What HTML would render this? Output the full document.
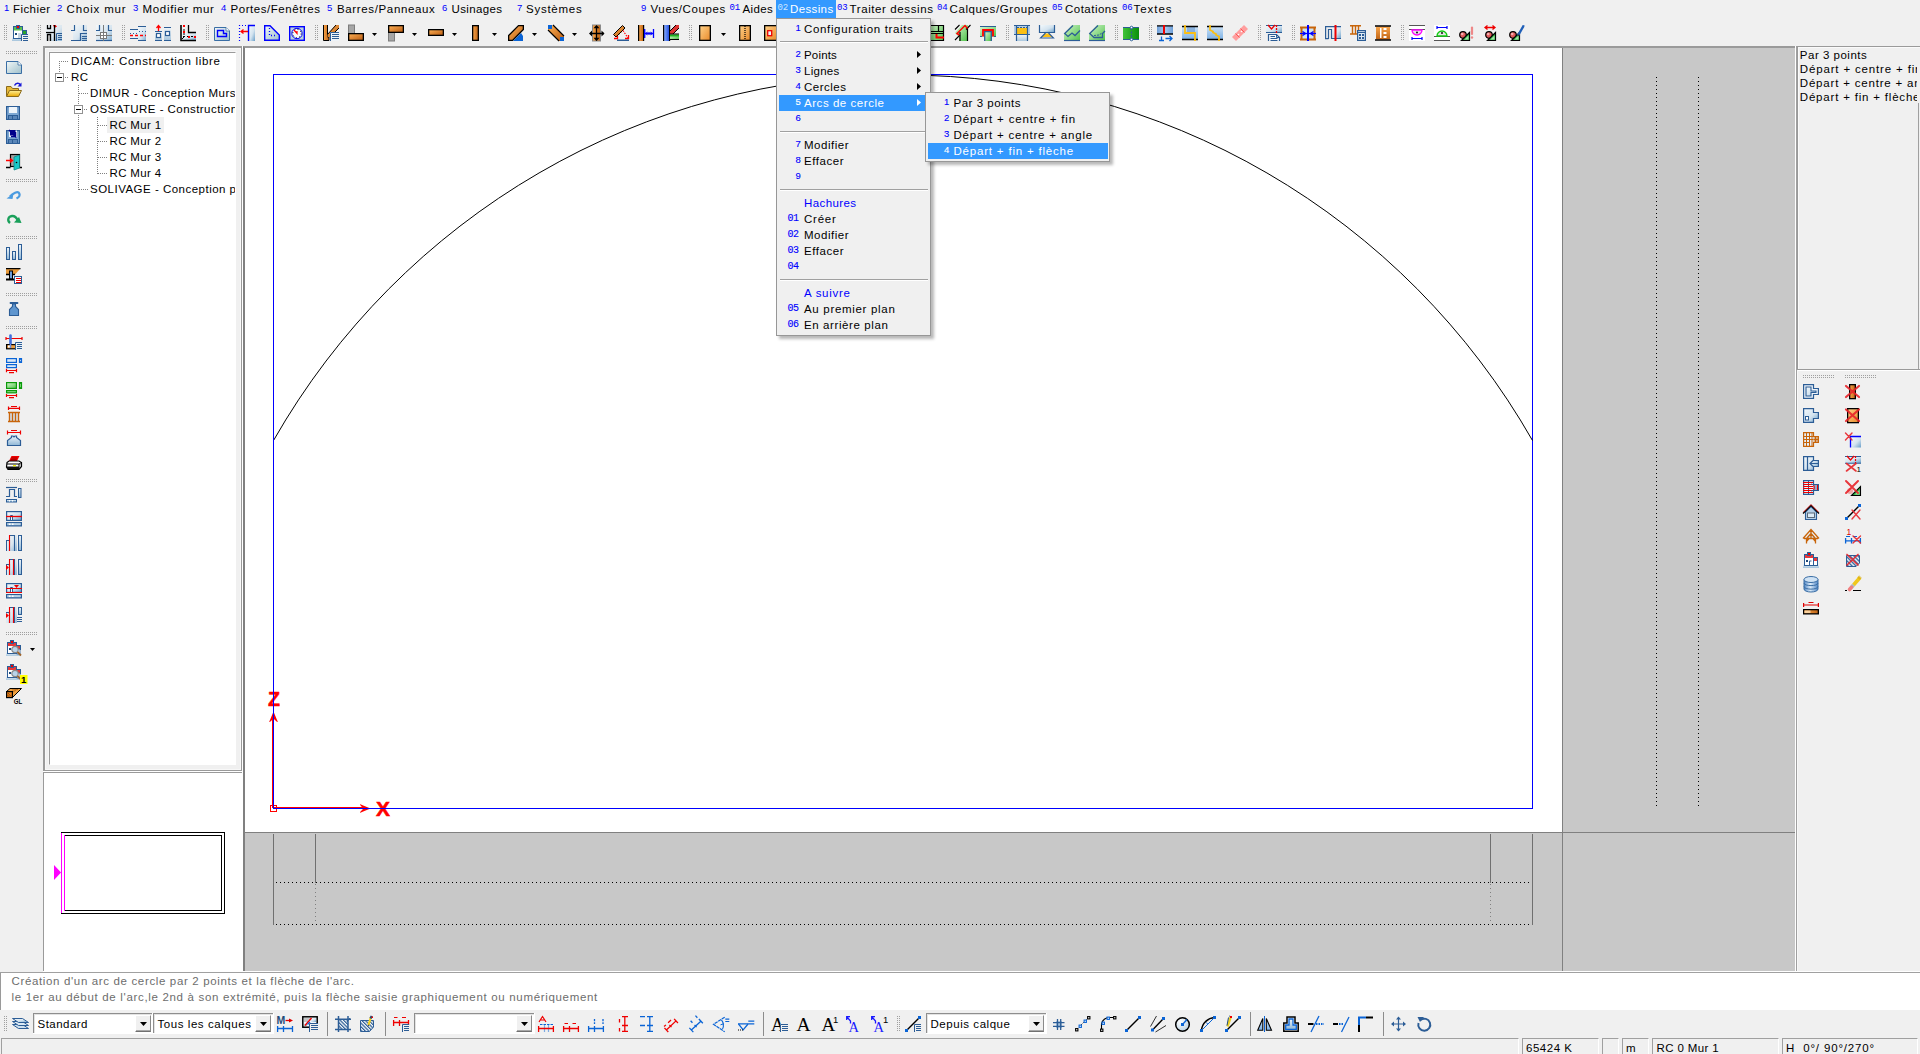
<!DOCTYPE html>
<html><head><meta charset="utf-8"><title>DICAM</title><style>
html,body{margin:0;padding:0;}
body{width:1920px;height:1054px;overflow:hidden;background:#f0f0f0;position:relative;font-family:"Liberation Sans",sans-serif;}
div,svg{position:absolute;}
.t{white-space:pre;line-height:14px;height:14px;}
.i{overflow:visible;}
.vg{width:3px;background-image:radial-gradient(circle at 0.5px 0.5px,#a0a0a0 0.6px,transparent 0.7px);background-size:2px 2px;}
.hg{height:3px;background-image:radial-gradient(circle at 0.5px 0.5px,#a0a0a0 0.6px,transparent 0.7px);background-size:2px 2px;}
</style></head><body>
<svg width="0" height="0" style="position:absolute"><defs>
<linearGradient id="gb" x1="0" y1="0" x2="1" y2="1"><stop offset="0" stop-color="#f4f9fc"/><stop offset="0.55" stop-color="#d3e3ef"/><stop offset="1" stop-color="#6a9fc9"/></linearGradient>
<linearGradient id="gbv" x1="0" y1="0" x2="0" y2="1"><stop offset="0" stop-color="#eef5fa"/><stop offset="1" stop-color="#8fb7d6"/></linearGradient>
<linearGradient id="gbg" x1="0" y1="0" x2="1" y2="1"><stop offset="0" stop-color="#f1f7f7"/><stop offset="1" stop-color="#9fc0cb"/></linearGradient>
<linearGradient id="go" x1="0" y1="0" x2="1" y2="1"><stop offset="0" stop-color="#ffb257"/><stop offset="1" stop-color="#b85a10"/></linearGradient>
<linearGradient id="goh" x1="0" y1="0" x2="0" y2="1"><stop offset="0" stop-color="#f9a54a"/><stop offset="1" stop-color="#bf6416"/></linearGradient>
<linearGradient id="gov" x1="0" y1="0" x2="1" y2="0"><stop offset="0" stop-color="#f9a54a"/><stop offset="1" stop-color="#bf6416"/></linearGradient>
<linearGradient id="gp" x1="0" y1="0" x2="1" y2="1"><stop offset="0" stop-color="#ffd28a"/><stop offset="1" stop-color="#e88a2a"/></linearGradient>
<linearGradient id="gg" x1="0" y1="0" x2="1" y2="1"><stop offset="0" stop-color="#d4f5cd"/><stop offset="1" stop-color="#4fc24a"/></linearGradient>
<linearGradient id="ggd" x1="0" y1="0" x2="1" y2="0"><stop offset="0" stop-color="#3fc23a"/><stop offset="1" stop-color="#0a8f0a"/></linearGradient>
<linearGradient id="gy" x1="0" y1="0" x2="0" y2="1"><stop offset="0" stop-color="#fff09a"/><stop offset="1" stop-color="#e9a800"/></linearGradient>
<linearGradient id="gbl" x1="0" y1="0" x2="0" y2="1"><stop offset="0" stop-color="#c9e0f5"/><stop offset="1" stop-color="#7fb2e5"/></linearGradient>
</defs></svg>
<div style="left:776px;top:0px;width:60px;height:18px;background:#3399ff;"></div>
<div class="t " style="left:4px;top:0.50px;font-size:9.5px;letter-spacing:0.000px;color:#00f;">1</div>
<div class="t " style="left:13px;top:2.00px;font-size:11.5px;letter-spacing:0.428px;color:#000;">Fichier</div>
<div class="t " style="left:57px;top:0.50px;font-size:9.5px;letter-spacing:0.000px;color:#00f;">2</div>
<div class="t " style="left:66.5px;top:2.00px;font-size:11.5px;letter-spacing:0.844px;color:#000;">Choix mur</div>
<div class="t " style="left:133px;top:0.50px;font-size:9.5px;letter-spacing:0.000px;color:#00f;">3</div>
<div class="t " style="left:142.5px;top:2.00px;font-size:11.5px;letter-spacing:0.675px;color:#000;">Modifier mur</div>
<div class="t " style="left:221px;top:0.50px;font-size:9.5px;letter-spacing:0.000px;color:#00f;">4</div>
<div class="t " style="left:230.5px;top:2.00px;font-size:11.5px;letter-spacing:0.546px;color:#000;">Portes/Fenêtres</div>
<div class="t " style="left:327px;top:0.50px;font-size:9.5px;letter-spacing:0.000px;color:#00f;">5</div>
<div class="t " style="left:337px;top:2.00px;font-size:11.5px;letter-spacing:0.642px;color:#000;">Barres/Panneaux</div>
<div class="t " style="left:442px;top:0.50px;font-size:9.5px;letter-spacing:0.000px;color:#00f;">6</div>
<div class="t " style="left:451.5px;top:2.00px;font-size:11.5px;letter-spacing:0.382px;color:#000;">Usinages</div>
<div class="t " style="left:517px;top:0.50px;font-size:9.5px;letter-spacing:0.000px;color:#00f;">7</div>
<div class="t " style="left:526px;top:2.00px;font-size:11.5px;letter-spacing:0.752px;color:#000;">Systèmes</div>
<div class="t " style="left:641px;top:0.50px;font-size:9.5px;letter-spacing:0.000px;color:#00f;">9</div>
<div class="t " style="left:650.5px;top:2.00px;font-size:11.5px;letter-spacing:0.625px;color:#000;">Vues/Coupes</div>
<div class="t " style="left:729.5px;top:1.00px;font-size:9px;letter-spacing:-0.101px;color:#00f;font-family:'Liberation Mono',monospace;">01</div>
<div class="t " style="left:742.5px;top:2.00px;font-size:11.5px;letter-spacing:0.346px;color:#000;">Aides</div>
<div class="t " style="left:777.5px;top:1.00px;font-size:9px;letter-spacing:-0.101px;color:#cfe6ff;font-family:'Liberation Mono',monospace;">02</div>
<div class="t " style="left:790px;top:2.00px;font-size:11.5px;letter-spacing:0.371px;color:#fff;">Dessins</div>
<div class="t " style="left:837px;top:1.00px;font-size:9px;letter-spacing:-0.101px;color:#00f;font-family:'Liberation Mono',monospace;">03</div>
<div class="t " style="left:849.5px;top:2.00px;font-size:11.5px;letter-spacing:0.601px;color:#000;">Traiter dessins</div>
<div class="t " style="left:937px;top:1.00px;font-size:9px;letter-spacing:-0.101px;color:#00f;font-family:'Liberation Mono',monospace;">04</div>
<div class="t " style="left:949.5px;top:2.00px;font-size:11.5px;letter-spacing:0.600px;color:#000;">Calques/Groupes</div>
<div class="t " style="left:1052px;top:1.00px;font-size:9px;letter-spacing:-0.101px;color:#00f;font-family:'Liberation Mono',monospace;">05</div>
<div class="t " style="left:1065px;top:2.00px;font-size:11.5px;letter-spacing:0.491px;color:#000;">Cotations</div>
<div class="t " style="left:1122px;top:1.00px;font-size:9px;letter-spacing:-0.101px;color:#00f;font-family:'Liberation Mono',monospace;">06</div>
<div class="t " style="left:1133.5px;top:2.00px;font-size:11.5px;letter-spacing:0.961px;color:#000;">Textes</div>
<div class="vg" style="left:4px;top:25px;height:16px"></div>
<svg class="i" style="left:12px;top:25px" width="16" height="16" viewBox="0 0 16 16"><rect x="0" y="12" width="10" height="4" fill="url(#gbv)" opacity=".8"/><rect x="1.5" y="1.5" width="9" height="12" fill="#fff" stroke="#2c5d96"/><rect x="2" y="2" width="8" height="3.5" fill="#5cc24f"/><rect x="4.500" y="0.5" width="3" height="3" fill="#e00" stroke="#2c5d96"/><rect x="10.5" y="5.5" width="4" height="4" fill="#2aa52a" stroke="#2c5d96"/><rect x="3" y="8" width="2" height="2" fill="#1f4a7a"/><rect x="6" y="8" width="3" height="5" fill="#c8d6e2"/><rect x="9" y="9" width="7" height="7" fill="#f0f0f0"/><path d="M9.5 16V9.5H16" fill="none" stroke="#2c5d96"/><path d="M11 11.5H16M11 13.5H16M11 15.5H16" stroke="#2c5d96" fill="none"/></svg>
<div class="vg" style="left:38px;top:25px;height:16px"></div>
<svg class="i" style="left:46px;top:25px" width="16" height="16" viewBox="0 0 16 16"><rect x="0" y="0" width="16" height="16" fill="url(#gb)" opacity=".7"/><path d="M1.5 0V3.5H4.5V0" fill="none" stroke="#000" stroke-width="1.3"/><path d="M7 0H9.500L11 1.5L8.500 3z" fill="#f00"/><path d="M8.500 0V16" stroke="#000" stroke-width="1.3"/><path d="M0 7.5H8.500" stroke="#000" stroke-width="1.2"/><rect x="2" y="10" width="2.500" height="6" fill="#c8c8c8"/><path d="M1.5 16V9.500H4.500V16" fill="none" stroke="#000" stroke-width="1.3"/><path d="M10.5 16V8.5H16" fill="none" stroke="#2c5d96"/><path d="M12 10.5H16M12 12.5H16M12 14.5H16" stroke="#2c5d96" fill="none"/></svg>
<svg class="i" style="left:71px;top:25px" width="16" height="16" viewBox="0 0 16 16"><rect x="2" y="0" width="14" height="16" fill="url(#gb)" opacity=".8"/><path d="M3.500 0V5.500H0M12.500 0V5.500H16" fill="none" stroke="#2c5d96" stroke-width="1.2"/><path d="M0 15.500H9.500V8.500H16" fill="none" stroke="#2c5d96" stroke-width="1.2"/><path d="M11 11.500H16M11 13.500H16M11 15.500H16" stroke="#2c5d96"/></svg>
<svg class="i" style="left:96px;top:25px" width="16" height="16" viewBox="0 0 16 16"><rect x="0" y="0" width="16" height="16" fill="url(#gb)" opacity=".85"/><path d="M3.500 0V5.500H0M12.500 0V5.500H16" fill="none" stroke="#2c5d96" stroke-width="1.2"/><path d="M0 15.500H16" stroke="#2c5d96" stroke-width="1.2"/><rect x="4.500" y="7.500" width="6" height="6" fill="#fff" stroke="#7a7a7a"/><path d="M7.500 0V16M0 10.500H16" stroke="#7a7a7a"/></svg>
<div class="vg" style="left:122px;top:25px;height:16px"></div>
<svg class="i" style="left:130px;top:25px" width="16" height="16" viewBox="0 0 16 16"><rect x="8" y="2" width="8" height="14" fill="url(#gb)" opacity=".9"/><rect x="0" y="5" width="8" height="8" fill="#e9f1f7"/><path d="M0 4.500H8M0 13.500H8M8 1.500H16M8 15.500H16" stroke="#2c5d96" stroke-width="1.2"/><path d="M0 8.500H8M9 6.500H16" stroke="#2c5d96" stroke-dasharray="1 2" stroke-width="1.2"/><path d="M0 10.500H16" stroke="#f00" stroke-dasharray="3 2" stroke-width="1.300"/></svg>
<svg class="i" style="left:155px;top:25px" width="16" height="16" viewBox="0 0 16 16"><rect x="0" y="7" width="7" height="9" fill="url(#gbv)" opacity=".8"/><rect x="9" y="3" width="7" height="13" fill="url(#gbv)" opacity=".8"/><path d="M0 6.500H7M0 15.500H7M9 2.500H16M9 15.500H16" stroke="#2c5d96" stroke-width="1.2"/><rect x="1.500" y="8.500" width="4" height="4" fill="#fff" stroke="#2c5d96" stroke-width="1.2"/><rect x="10.500" y="6.500" width="4" height="4" fill="#fff" stroke="#2c5d96" stroke-width="1.2"/><path d="M3.500 6V0.500M1.500 3L3.500 0.500L5.500 3" fill="none" stroke="#f00" stroke-width="1.300"/></svg>
<svg class="i" style="left:180px;top:25px" width="16" height="16" viewBox="0 0 16 16"><rect x="2" y="8" width="14" height="7" fill="url(#gb)" opacity=".9"/><path d="M1 0V15.500H16" fill="none" stroke="#000" stroke-width="1.600"/><path d="M8.500 0V7.500H16" fill="none" stroke="#000" stroke-width="1.300"/><path d="M4 0V12M3 11.500H16" stroke="#000" stroke-dasharray="2 2" fill="none"/><path d="M4 12L2 14" stroke="#000"/><rect x="3" y="0" width="2" height="2" fill="#f00"/><rect x="3" y="6" width="2" height="2" fill="#f00"/><rect x="8" y="11" width="2" height="2" fill="#f00"/><rect x="14" y="11" width="2" height="2" fill="#f00"/></svg>
<div class="vg" style="left:206px;top:25px;height:16px"></div>
<svg class="i" style="left:214px;top:25px" width="16" height="16" viewBox="0 0 16 16"><path d="M0.500 2.500H12L15.500 6V15.500H0.500z" fill="url(#gbg)" stroke="#3a6ea5"/><path d="M12 2.500V6H15.500" fill="#fff" stroke="#3a6ea5" stroke-width=".8"/><path d="M3.500 5.500H9.500V8.500H12.500V11.500H3.500z" fill="none" stroke="#00f" stroke-width="1.400"/></svg>
<svg class="i" style="left:239px;top:25px" width="16" height="16" viewBox="0 0 16 16"><rect x="10" y="1" width="6" height="15" fill="url(#gb)"/><path d="M9.500 16V0.500H16" fill="none" stroke="#00f" stroke-width="1.400"/><path d="M0 0.500H8" stroke="#00f" stroke-dasharray="1 2" stroke-width="1.2"/><path d="M0.500 0V16" stroke="#00f" stroke-dasharray="1 2" stroke-width="1.2"/><path d="M9 6.500H2M4.500 4.500L2 6.500L4.500 8.500" fill="none" stroke="#f00" stroke-width="1.300"/></svg>
<svg class="i" style="left:264px;top:25px" width="16" height="16" viewBox="0 0 16 16"><path d="M0.700 0.700H6L15.300 10V15.300H0.700z" fill="url(#gbg)" stroke="#00f" stroke-width="1.400"/><path d="M5.500 3V10.500H13" fill="none" stroke="#00f" stroke-dasharray="1 2" stroke-width="1.300"/></svg>
<svg class="i" style="left:289px;top:25px" width="16" height="16" viewBox="0 0 16 16"><rect x="0.700" y="1.700" width="14.600" height="13.600" fill="#b9d2dc" stroke="#00f" stroke-width="1.400"/><circle cx="8" cy="8.500" r="5.200" fill="#f4fafc" stroke="#00f"/><circle cx="8" cy="8.500" r="4.200" fill="none" stroke="#000" stroke-width="1" stroke-dasharray="1 2.300"/><path d="M5 5L8 8.500V6" stroke="#f00" fill="none" stroke-width="1.200"/></svg>
<div class="vg" style="left:315px;top:25px;height:16px"></div>
<svg class="i" style="left:323px;top:25px" width="16" height="16" viewBox="0 0 16 16"><path d="M0.500 0V15.500H6V12H4.500V0" fill="url(#gov)" stroke="#000"/><path d="M4.500 9.500L12.500 0H16V3L7 12H4.500z" fill="url(#go)"/><path d="M4.500 9.500L13 0M16 3L12 7" stroke="#000" fill="none"/><rect x="7" y="7" width="9" height="9" fill="#eef3f8"/><path d="M7.5 16V7.5H16" fill="none" stroke="#2c5d96"/><path d="M9 9.5H16M9 11.5H16M9 13.5H16" stroke="#2c5d96" fill="none"/></svg>
<svg class="i" style="left:348px;top:25px" width="16" height="16" viewBox="0 0 16 16"><rect x="0.500" y="0" width="6" height="9" fill="#a6a6a6" stroke="#7d7d7d"/><rect x="0.650" y="8.650" width="14.700" height="6.700" fill="url(#go)" stroke="#000" stroke-width="1.300"/></svg>
<svg class="i" style="left:372px;top:33px" width="5" height="3" viewBox="0 0 5 3"><path d="M0 0h5L2.5 3z" fill="#000"/></svg>
<svg class="i" style="left:388px;top:25px" width="16" height="16" viewBox="0 0 16 16"><rect x="0.500" y="7" width="6" height="9" fill="#a6a6a6" stroke="#7d7d7d"/><rect x="0.650" y="0.650" width="14.700" height="6.700" fill="url(#go)" stroke="#000" stroke-width="1.300"/></svg>
<svg class="i" style="left:412px;top:33px" width="5" height="3" viewBox="0 0 5 3"><path d="M0 0h5L2.5 3z" fill="#000"/></svg>
<svg class="i" style="left:428px;top:25px" width="16" height="16" viewBox="0 0 16 16"><rect x="0.650" y="4.650" width="14.700" height="5.700" fill="url(#go)" stroke="#000" stroke-width="1.300"/></svg>
<svg class="i" style="left:452px;top:33px" width="5" height="3" viewBox="0 0 5 3"><path d="M0 0h5L2.5 3z" fill="#000"/></svg>
<svg class="i" style="left:468px;top:25px" width="16" height="16" viewBox="0 0 16 16"><rect x="4.650" y="0.650" width="5.700" height="14.700" fill="url(#gov)" stroke="#000" stroke-width="1.300"/></svg>
<svg class="i" style="left:492px;top:33px" width="5" height="3" viewBox="0 0 5 3"><path d="M0 0h5L2.5 3z" fill="#000"/></svg>
<svg class="i" style="left:508px;top:25px" width="16" height="16" viewBox="0 0 16 16"><path d="M5 16L13 8L15 11V16z" fill="#0a64d6"/><path d="M0.650 10.500L10.500 0.650H15.350V4.500L4.500 15.350H0.650z" fill="url(#go)" stroke="#000" stroke-width="1.300"/></svg>
<svg class="i" style="left:532px;top:33px" width="5" height="3" viewBox="0 0 5 3"><path d="M0 0h5L2.5 3z" fill="#000"/></svg>
<svg class="i" style="left:548px;top:25px" width="16" height="16" viewBox="0 0 16 16"><path d="M0 4L5 0L16 11V12L12 16H11L0 5z" fill="url(#go)"/><path d="M5 0L16 11M0 5L11 16" stroke="#000" stroke-width="1.200"/><rect x="0" y="0" width="4" height="4" fill="#0a64d6"/><rect x="12" y="12" width="4" height="4" fill="#0a64d6"/></svg>
<svg class="i" style="left:572px;top:33px" width="5" height="3" viewBox="0 0 5 3"><path d="M0 0h5L2.5 3z" fill="#000"/></svg>
<svg class="i" style="left:589px;top:25px" width="16" height="16" viewBox="0 0 16 16"><rect x="3.500" y="0" width="8" height="16" fill="url(#gov)" stroke="#8a8a8a"/><path d="M1 8.500H15M7.500 1V15.500" stroke="#000" stroke-width="1.300"/><path d="M0 8.500L3 5.500V11.500zM15.500 8.500L12.500 5.500V11.500zM7.500 0L4.500 3.200H10.500zM7.500 16L4.500 12.800H10.500z" fill="#000"/></svg>
<svg class="i" style="left:613px;top:25px" width="16" height="16" viewBox="0 0 16 16"><path d="M0.500 9.500L9.500 0.500L12 3L3 12z" fill="url(#go)" stroke="#000"/><path d="M2.500 9.500L4.500 11.500M4.500 7.500L6.500 9.500M6.500 5.500L8.500 7.500" stroke="#c8700f" stroke-width=".7"/><path d="M10 5.500L15 13" stroke="#f00" stroke-dasharray="1.500 1.200" stroke-width="1.200" fill="none"/><path d="M1 13.500H4.500V11M12 13.500H15.500V10" stroke="#f00" fill="none" stroke-width="1.300"/><rect x="4" y="14.500" width="12" height="1.500" fill="#2c5d96"/></svg>
<svg class="i" style="left:638px;top:25px" width="16" height="16" viewBox="0 0 16 16"><rect x="0.500" y="0" width="5" height="16" fill="url(#gov)"/><path d="M0.600 0V16M5.600 0V16" stroke="#000" stroke-width="1.200"/><path d="M6.700 4V13M15.500 4V13M7 8.500H15.500" stroke="#00f" stroke-width="1.300"/><path d="M7 8.500L9.500 6.500V10.500zM15 8.500L12.500 6.500V10.500z" fill="#00f"/><path d="M10.500 7L12 8.500L10.500 10" fill="none" stroke="#00f"/></svg>
<svg class="i" style="left:663px;top:25px" width="16" height="16" viewBox="0 0 16 16"><defs><linearGradient id="gcb" x1="0" y1="0" x2="1" y2="0"><stop offset="0" stop-color="#8fb4ff"/><stop offset="1" stop-color="#1a48e0"/></linearGradient></defs><rect x="0.600" y="0" width="6" height="16" fill="url(#gcb)"/><path d="M0.600 0V16M6.600 0V16" stroke="#000" stroke-width="1.200"/><path d="M7 6L13 0H16V3L10 9H7z" fill="#d33"/><path d="M7 6L13 0M16 3L10 9" stroke="#000" fill="none"/><rect x="7" y="9.500" width="9" height="5" fill="url(#gg)"/><rect x="7" y="9.500" width="9" height="2" fill="#1fb31f"/><path d="M7 9H16M7 14.500H16" stroke="#000" stroke-width="1.200"/></svg>
<div class="vg" style="left:689px;top:25px;height:16px"></div>
<svg class="i" style="left:697px;top:25px" width="16" height="16" viewBox="0 0 16 16"><rect x="2.650" y="0.650" width="10.700" height="14.700" fill="url(#gp)" stroke="#000" stroke-width="1.300"/></svg>
<svg class="i" style="left:721px;top:33px" width="5" height="3" viewBox="0 0 5 3"><path d="M0 0h5L2.5 3z" fill="#000"/></svg>
<svg class="i" style="left:737px;top:25px" width="16" height="16" viewBox="0 0 16 16"><rect x="2.650" y="0.650" width="10.700" height="14.700" fill="url(#gp)" stroke="#000" stroke-width="1.300"/><path d="M8 1V15" stroke="#000" stroke-dasharray="1 1" stroke-width="1.200"/></svg>
<svg class="i" style="left:762px;top:25px" width="16" height="16" viewBox="0 0 16 16"><rect x="2.650" y="0.650" width="12" height="14.700" fill="url(#gp)" stroke="#000" stroke-width="1.300"/><rect x="5.700" y="5.700" width="4" height="5" fill="#e9f2f7" stroke="#e00" stroke-width="1.300"/></svg>
<svg class="i" style="left:928px;top:25px" width="16" height="16" viewBox="0 0 16 16"><rect x="0" y="0" width="16" height="16" fill="url(#gg)"/><path d="M0 0.500H16M0 6.500H16M0 8.500H16M0 15.500H16M10.500 0V6.500M15.500 0V16" stroke="#000" stroke-width="1.200" fill="none"/><path d="M8.500 9V12.500H16" stroke="#f00" stroke-width="2" fill="none"/></svg>
<svg class="i" style="left:955px;top:25px" width="16" height="16" viewBox="0 0 16 16"><path d="M0 8L7 0H13V16H4V12z" fill="url(#gg)"/><path d="M5 0V16" stroke="none"/><path d="M0 4.500L4.500 0M0 15L5 10M11 4.500L15.500 0" stroke="#000" stroke-width="1.100" fill="none"/><path d="M5 16V7M12.500 16V3" stroke="#000" stroke-width="1.200"/><path d="M4.500 10L2 8.500L10 0.500L12.500 3.500" stroke="#f00" stroke-width="1.500" fill="none"/></svg>
<svg class="i" style="left:980px;top:25px" width="16" height="16" viewBox="0 0 16 16"><rect x="0" y="2" width="16" height="9.500" fill="url(#gg)"/><rect x="5" y="7" width="6" height="9" fill="url(#gg)"/><path d="M0 1.500H16M0 11.500H2M14 11.500H16" stroke="#2c5d96" stroke-width="1.200"/><path d="M3 11.500V5H13V11.500" fill="none" stroke="#f00" stroke-width="1.800"/><path d="M4.700 16V6.700H11.300V16" fill="none" stroke="#2c5d96" stroke-width="1.300"/></svg>
<div class="vg" style="left:1006px;top:25px;height:16px"></div>
<svg class="i" style="left:1014px;top:25px" width="16" height="16" viewBox="0 0 16 16"><rect x="0" y="1" width="16" height="8" fill="#b5cfe8"/><rect x="3" y="10" width="10" height="6" fill="url(#gbv)" opacity=".7"/><rect x="3" y="3" width="10" height="6" fill="#fbbf14"/><path d="M0 0.500H16M0 9.500H16M2.500 1V16M13.500 1V16" stroke="#2c5d96" stroke-width="1.200" fill="none"/><path d="M3 2.500H13" stroke="#2c5d96" stroke-dasharray="2 1"/></svg>
<svg class="i" style="left:1039px;top:25px" width="16" height="16" viewBox="0 0 16 16"><rect x="0.500" y="0" width="15" height="7.500" fill="url(#gb)"/><path d="M0.500 0V7.500H15.500V0" fill="none" stroke="#2c5d96" stroke-width="1.200"/><path d="M6 8.500H10L13.500 12H2.500z" fill="#fbbf14"/><path d="M6.500 8L1.500 13H14.500L9.500 8" fill="none" stroke="#2c5d96" stroke-width="1.100"/></svg>
<svg class="i" style="left:1064px;top:25px" width="16" height="16" viewBox="0 0 16 16"><path d="M8 0H16V16H0V8.500z" fill="url(#gg)"/><path d="M0 15.500H16" stroke="#2c5d96" stroke-width="1.200"/><path d="M9 0.500L0.700 8.500L4 11.500L8 8L11 10.500L16 5.500" fill="none" stroke="#2c5d96" stroke-width="1.300"/></svg>
<svg class="i" style="left:1089px;top:25px" width="16" height="16" viewBox="0 0 16 16"><path d="M8 0H16V16H0V8.500z" fill="url(#gg)"/><path d="M0 15.500H16" stroke="#2c5d96" stroke-width="1.200"/><path d="M9 0.500L0.700 8.500L5 12.500H13.500V8.500L16 6" fill="none" stroke="#2c5d96" stroke-width="1.300"/><path d="M5 10.500L10 10L13 8" fill="none" stroke="#2c5d96" stroke-dasharray="2 1"/></svg>
<div class="vg" style="left:1115px;top:25px;height:16px"></div>
<svg class="i" style="left:1123px;top:25px" width="16" height="16" viewBox="0 0 16 16"><rect x="0" y="2.500" width="16" height="12" fill="url(#ggd)"/><path d="M0 2.500H16M0 14.500H16" stroke="#2c5d96" stroke-width="1.200"/><path d="M8.500 3V14" stroke="#2c5d96" stroke-dasharray="2 1.500" stroke-width="1.200"/><circle cx="8.500" cy="2.500" r="1.300" fill="#fff" stroke="#2c5d96"/><circle cx="8.500" cy="14.500" r="1.300" fill="#fff" stroke="#2c5d96"/></svg>
<div class="vg" style="left:1149px;top:25px;height:16px"></div>
<svg class="i" style="left:1157px;top:25px" width="16" height="16" viewBox="0 0 16 16"><defs><linearGradient id="gbh" x1="0" y1="0" x2="1" y2="0"><stop offset="0" stop-color="#6f9fd8"/><stop offset=".5" stop-color="#a9cbf0"/><stop offset="1" stop-color="#6f9fd8"/></linearGradient></defs><rect x="0" y="1" width="16" height="8" fill="url(#gbh)"/><path d="M0 0.800H16M0 9H16" stroke="#000" stroke-width="1.300"/><rect x="6" y="0" width="2" height="9" fill="#e00"/><path d="M2 15.500H7M4.500 15.500V11.500M8.500 13.500H15M12.500 11L15 13.500L12.500 16" fill="none" stroke="#0a64d6" stroke-width="1.300"/></svg>
<svg class="i" style="left:1182px;top:25px" width="16" height="16" viewBox="0 0 16 16"><rect x="0" y="2" width="16" height="12" fill="url(#gbl)"/><rect x="5" y="2" width="8" height="6" fill="#6a9ad0" opacity=".6"/><path d="M0 1.500H16M0 14.500H16" stroke="#000" stroke-width="1.300"/><path d="M3 0V8H13V16" fill="none" stroke="#fbbf14" stroke-width="1.800"/></svg>
<svg class="i" style="left:1207px;top:25px" width="16" height="16" viewBox="0 0 16 16"><rect x="0" y="2" width="16" height="12" fill="url(#gbl)"/><path d="M0 1.500H16M0 14.500H16" stroke="#000" stroke-width="1.300"/><path d="M3 0V5L6 6.500V7.500L9 9V10L12 11.500V16" fill="none" stroke="#fbbf14" stroke-width="1.800"/></svg>
<svg class="i" style="left:1232px;top:25px" width="16" height="16" viewBox="0 0 16 16"><path d="M0 12L12 0L16 4L4 16z" fill="#ff9e9e"/><path d="M3.500 8.500L7.500 12.500M8.500 3.500L12.500 7.500" stroke="#f55" stroke-width="1"/><circle cx="6.500" cy="9.500" r=".8" fill="#fff"/><circle cx="9.500" cy="6.500" r=".8" fill="#fff"/></svg>
<div class="vg" style="left:1258px;top:25px;height:16px"></div>
<svg class="i" style="left:1266px;top:25px" width="16" height="16" viewBox="0 0 16 16"><rect x="0" y="0" width="16" height="8" fill="url(#gb)"/><path d="M0 0.500H16M0 7.500H16" stroke="#2c5d96" stroke-width="1.200"/><path d="M2 0L5.500 4L9 0" fill="none" stroke="#e00" stroke-width="1.300"/><path d="M10.500 0V8" stroke="#e00" stroke-dasharray="2 1" stroke-width="1.300"/><path d="M2.500 16V9.500H10.500L13.500 12.500V16" fill="#f4f8fb" stroke="#2c5d96" stroke-width="1.200"/><path d="M10.500 9.500V12.500H13.500" fill="none" stroke="#2c5d96"/><path d="M4.500 11.500H9M4.500 13.500H11.500M4.500 15.500H11.500" stroke="#2c5d96"/></svg>
<div class="vg" style="left:1292px;top:25px;height:16px"></div>
<svg class="i" style="left:1300px;top:25px" width="16" height="16" viewBox="0 0 16 16"><rect x="2" y="3" width="12" height="11" fill="#cfe3f1"/><path d="M0 2.500H16M0 14.500H16" stroke="#c8650a" stroke-width="2"/><path d="M1.500 2V15M14.500 2V15" stroke="#c8650a" stroke-width="2"/><path d="M8 0V16" stroke="#00f" stroke-width="2"/><path d="M0 8.500H16" stroke="#00f" stroke-width="1.200"/><path d="M2.500 6.500L5.500 8.500L2.500 10.500M13.500 6.500L10.500 8.500L13.500 10.500" fill="none" stroke="#00f" stroke-width="1.400"/></svg>
<svg class="i" style="left:1325px;top:25px" width="16" height="16" viewBox="0 0 16 16"><rect x="7" y="2" width="9" height="12" fill="url(#gb)"/><path d="M0.600 14V1.600H16M3.500 14V4.500H6.500V13.500H16M0 13.600H3.500" fill="none" stroke="#2c5d96" stroke-width="1.200"/><path d="M10.500 0V16" stroke="#e00" stroke-width="2"/></svg>
<svg class="i" style="left:1350px;top:25px" width="16" height="16" viewBox="0 0 16 16"><path d="M0 0.700H11M0 9H7M2.500 1V9M5.500 1V9M8.500 1V5" stroke="#c8650a" stroke-width="1.400" fill="none"/><rect x="7.600" y="5.600" width="7.800" height="9.800" fill="#dfeaf3" stroke="#2c5d96" stroke-width="1.200"/><rect x="9" y="9" width="2" height="2" fill="#2c5d96"/><rect x="12" y="9" width="2" height="2" fill="#2c5d96"/><rect x="9" y="12" width="2" height="2" fill="#2c5d96"/><rect x="12" y="12" width="2" height="2" fill="#2c5d96"/><path d="M8 7.500H15" stroke="#2c5d96"/></svg>
<svg class="i" style="left:1375px;top:25px" width="16" height="16" viewBox="0 0 16 16"><rect x="1" y="1.500" width="14" height="13" fill="url(#goh)"/><rect x="5" y="3" width="1.500" height="10" fill="#fff"/><rect x="8.500" y="3" width="3" height="2" fill="#fff"/><rect x="8.500" y="7" width="3" height="2" fill="#fff"/><rect x="8.500" y="11" width="3" height="2" fill="#fff"/><path d="M0 1H16M0 15H16" stroke="#000" stroke-width="1.500"/></svg>
<div class="vg" style="left:1401px;top:25px;height:16px"></div>
<svg class="i" style="left:1409px;top:25px" width="16" height="16" viewBox="0 0 16 16"><rect x="0" y="0" width="16" height="16" fill="#fff"/><path d="M0 0.500H16M0 4.500H16" stroke="#555" stroke-width="1.100"/><path d="M3 5H13A5 5 0 0 1 3 5z" fill="#e4e4e4" stroke="#f0f" stroke-width="1.300"/><circle cx="8" cy="7.500" r=".9" fill="#000"/><path d="M3 13.500H13M3 12V15M13 12V15" stroke="#00f" stroke-width="1.200"/></svg>
<svg class="i" style="left:1434px;top:25px" width="16" height="16" viewBox="0 0 16 16"><rect x="0" y="0" width="16" height="16" fill="#fff"/><path d="M0 11.500H16M0 15.500H16" stroke="#555" stroke-width="1.100"/><path d="M3 11H13A5 5 0 0 0 3 11z" fill="#e4e4e4" stroke="#1c1" stroke-width="1.300"/><circle cx="8" cy="8" r=".9" fill="#000"/><path d="M3 2.500H13M3 1V4M13 1V4" stroke="#00f" stroke-width="1.200"/></svg>
<svg class="i" style="left:1459px;top:25px" width="16" height="16" viewBox="0 0 16 16"><circle cx="4" cy="10" r="3.300" fill="#e05a5a" stroke="#000" stroke-width="1.200"/><circle cx="3.200" cy="9" r="1.300" fill="#f6b0b0"/><path d="M2.500 15.500L10.500 7.500V15.500z" fill="#35b84a" stroke="#000" stroke-width="1.200"/><path d="M5.500 14.500L9.500 10.500V14.500z" fill="#9fe3a6"/><path d="M13 2.500V9" stroke="#e88" stroke-width="2.200" stroke-linecap="round"/><circle cx="13" cy="12.500" r="1.200" fill="#e88"/></svg>
<svg class="i" style="left:1484px;top:25px" width="16" height="16" viewBox="0 0 16 16"><g transform="translate(1,0)"><circle cx="4" cy="10" r="3.300" fill="#e05a5a" stroke="#000" stroke-width="1.200"/><circle cx="3.200" cy="9" r="1.300" fill="#f6b0b0"/><path d="M2.500 15.500L10.500 7.500V15.500z" fill="#35b84a" stroke="#000" stroke-width="1.200"/><path d="M5.500 14.500L9.500 10.500V14.500z" fill="#9fe3a6"/></g><path d="M1 2.500H11M3.500 0.500L1 2.500L3.500 4.500M8.500 0.500L11 2.500L8.500 4.500" fill="none" stroke="#e00" stroke-width="1.300"/></svg>
<svg class="i" style="left:1509px;top:25px" width="16" height="16" viewBox="0 0 16 16"><circle cx="4" cy="10" r="3.300" fill="#e05a5a" stroke="#000" stroke-width="1.200"/><circle cx="3.200" cy="9" r="1.300" fill="#f6b0b0"/><path d="M2.500 15.500L10.500 7.500V15.500z" fill="#35b84a" stroke="#000" stroke-width="1.200"/><path d="M5.500 14.500L9.500 10.500V14.500z" fill="#9fe3a6"/><path d="M14.500 1L9 10.500" stroke="#1f5fb8" stroke-width="2.400"/><path d="M15.500 0L13 0.500L15 2z" fill="#1f5fb8"/><path d="M9.500 9L8.500 11.500L10.500 10.500z" fill="#333"/></svg>
<div class="hg" style="left:6px;top:51px;width:32px"></div>
<svg class="i" style="left:6px;top:59px" width="16" height="16" viewBox="0 0 16 16"><path d="M0.500 2.500H12L15.500 6V14.500H0.500z" fill="url(#gbg)" stroke="#3a6ea5"/><path d="M12 2.500V6H15.500" fill="#fff" stroke="#3a6ea5" stroke-width=".8"/></svg>
<svg class="i" style="left:6px;top:82px" width="16" height="16" viewBox="0 0 16 16"><path d="M0.500 14V4.500H5L6.500 6.500H12.500V8" fill="#e7b93a" stroke="#8a6a1a"/><path d="M0.500 14.500L3.500 8.500H15.500L12.500 14.500z" fill="url(#gy)" stroke="#8a6a1a"/><path d="M8.500 3.500C10 0.500 13 0.500 14.500 3" fill="none" stroke="#1a1ad8" stroke-width="1.500"/><path d="M15.500 0.500V4.500H11.500z" fill="#1a1ad8"/></svg>
<svg class="i" style="left:6px;top:106px" width="16" height="16" viewBox="0 0 16 16"><rect x="0.600" y="0.600" width="12.800" height="12.800" fill="#7da7d2" stroke="#2c5d96" stroke-width="1.200"/><rect x="3" y="1" width="8" height="6" fill="#eef4fa"/><rect x="2.500" y="9.500" width="9" height="4" fill="#5a86b8" stroke="#2c5d96"/><path d="M6.500 9.500V13.500" stroke="#2c5d96"/></svg>
<svg class="i" style="left:6px;top:130px" width="16" height="16" viewBox="0 0 16 16"><rect x="0.600" y="0.600" width="12.800" height="12.800" fill="#7da7d2" stroke="#2c5d96" stroke-width="1.200"/><rect x="3" y="1" width="8" height="6" fill="#eef4fa"/><rect x="2.500" y="9.500" width="9" height="4" fill="#5a86b8" stroke="#2c5d96"/><path d="M6.500 9.500V13.500" stroke="#2c5d96"/><rect x="3" y="0.500" width="8" height="6" fill="#eef4fa"/><path d="M4 0H9.500V5.500H4z" fill="#00008b"/><path d="M4 0L9 5M9 1.500V5H5.500" stroke="#fff" stroke-width=".6" fill="none" opacity=".0"/><path d="M3 0L9.500 6.500V2M9.500 6.500H5" stroke="#00008b" stroke-width="1.600" fill="none"/></svg>
<svg class="i" style="left:6px;top:154px" width="16" height="16" viewBox="0 0 16 16"><rect x="4.500" y="0.500" width="9" height="12" fill="#a0a0a0" stroke="#000" stroke-width="1.200"/><path d="M0 13.500H4.500M13 13.500H16" stroke="#000" stroke-width="1.300"/><path d="M8 3L13.500 1V14L8 16z" fill="#18c8c8" stroke="#0a8a8a" stroke-width=".8"/><circle cx="10.500" cy="8.500" r=".8" fill="#000"/><path d="M0 6.500H6M4 4.500L6.500 6.500L4 8.500" fill="none" stroke="#f00" stroke-width="1.300"/></svg>
<div class="hg" style="left:6px;top:179px;width:32px"></div>
<svg class="i" style="left:6px;top:187px" width="16" height="16" viewBox="0 0 16 16"><path d="M4 9.500C6.500 6.500 12 3.500 13.300 6.500C14.200 8.500 12.500 10.500 10.500 11.500" fill="none" stroke="#4a9be0" stroke-width="2.200"/><path d="M0.500 11.500L7.500 6.500L6.500 12z" fill="#4a9be0"/></svg>
<svg class="i" style="left:6px;top:211px" width="16" height="16" viewBox="0 0 16 16"><path d="M4 12C1 9.500 2 5.500 6 5C9 4.700 11 7.500 12 9.500" fill="none" stroke="#1aa05a" stroke-width="2.300"/><path d="M15.500 12L8 11.500L13 6z" fill="#1aa05a"/></svg>
<div class="hg" style="left:6px;top:236px;width:32px"></div>
<svg class="i" style="left:6px;top:244px" width="16" height="16" viewBox="0 0 16 16"><rect x="0.500" y="3.500" width="3" height="12" fill="url(#gbv)" stroke="#2c5d96"/><rect x="6.500" y="7.500" width="3" height="8" fill="url(#gbv)" stroke="#2c5d96"/><rect x="12.500" y="0.500" width="3" height="15" fill="url(#gbv)" stroke="#2c5d96"/></svg>
<svg class="i" style="left:6px;top:268px" width="16" height="16" viewBox="0 0 16 16"><path d="M0 1H14L9 6.500H0z" fill="#e89a3a"/><path d="M0 0.600H14.500M0 6.500H3.500M6.500 6.500H9" stroke="#000" stroke-width="1.300"/><rect x="3.500" y="3" width="3" height="8" fill="#6f9fd8" stroke="#000"/><path d="M0 11.500H8" stroke="#000" stroke-width="2"/><rect x="8.500" y="8.500" width="7" height="7" fill="#fff" stroke="#2c5d96"/><path d="M10 10.500H15M10 12.500H15M10 14.500H15" stroke="#e00" stroke-width="1.200"/></svg>
<div class="hg" style="left:6px;top:293px;width:32px"></div>
<svg class="i" style="left:6px;top:301px" width="16" height="16" viewBox="0 0 16 16"><path d="M4.500 2H11.500" stroke="#2c5d96" stroke-width="1.800" stroke-linecap="round"/><path d="M6.500 3V5.500L3.500 8.500V14.500H12.500V8.500L9.500 5.500V3z" fill="#5f96cf" stroke="#2c5d96" stroke-width="1.100"/></svg>
<div class="hg" style="left:6px;top:326px;width:32px"></div>
<svg class="i" style="left:6px;top:334px" width="16" height="16" viewBox="0 0 16 16"><path d="M0 3V6M16 3V6M0 4.500H16" stroke="#e00" stroke-width="1.200"/><path d="M4.500 1.500V10" stroke="#3f6fe0" stroke-width="2.600" stroke-linecap="round"/><rect x="0.600" y="10.600" width="9.500" height="4.200" fill="#f0a040" stroke="#000" stroke-width="1.200"/><rect x="2" y="11.500" width="3" height="2" fill="#fff"/><path d="M4.500 10V14" stroke="#6f8fe0" stroke-width="1.500"/><rect x="9" y="8" width="7" height="8" fill="#eaf1f7"/><path d="M9.500 16V8.500H16M11 10.500H16M11 12.500H16M11 14.500H16" fill="none" stroke="#2c5d96"/></svg>
<svg class="i" style="left:6px;top:358px" width="16" height="16" viewBox="0 0 16 16"><rect x="0.600" y="0.600" width="9.800" height="3.800" fill="#dbe9f7" stroke="#0a64d6" stroke-width="1.200"/><rect x="13.500" y="0.600" width="2" height="3.800" fill="#dbe9f7" stroke="#0a64d6" stroke-width="1.200"/><rect x="0.600" y="6.600" width="9.800" height="3" fill="#dbe9f7" stroke="#0a64d6" stroke-width="1.200"/><path d="M0.500 10.800V14.200M10.500 10.800V14.200M0.500 12.500H10.500M3 14.700H8" stroke="#e00" stroke-width="1.200"/></svg>
<svg class="i" style="left:6px;top:382px" width="16" height="16" viewBox="0 0 16 16"><rect x="0.600" y="0.600" width="9.800" height="5.800" fill="url(#gg)" stroke="#0a9a0a" stroke-width="1.200"/><rect x="13.500" y="0.600" width="2" height="5.800" fill="#8fe08a" stroke="#0a9a0a" stroke-width="1.200"/><rect x="0.600" y="8.600" width="9.800" height="2.200" fill="#8fe08a" stroke="#0a9a0a" stroke-width="1.200"/><path d="M0.500 12V15M10.500 12V15M0.500 13.500H10.500M3 15.700H8" stroke="#e00" stroke-width="1.200"/></svg>
<svg class="i" style="left:6px;top:406px" width="16" height="16" viewBox="0 0 16 16"><path d="M2.500 0.500V4M13.500 0.500V4M2.500 2.300H13.500M5 0.500H11" stroke="#e00" stroke-width="1.200"/><rect x="3" y="6" width="10" height="9" fill="#d4e4f2"/><path d="M2 6.500H14M2 15.500H14" stroke="#c8650a" stroke-width="1.300"/><path d="M3.500 6.500V15.500M6.500 6.500V15.500M9.500 6.500V15.500M12.500 6.500V15.500" stroke="#c8650a" stroke-width="1.400"/></svg>
<svg class="i" style="left:6px;top:430px" width="16" height="16" viewBox="0 0 16 16"><path d="M1.500 0.500V4.500M14.500 0.500V4.500M1.500 2.500H14.500M5 0.500H11" stroke="#e00" stroke-width="1.200"/><path d="M1.500 15.500V10.500L5.500 7.500V6H7L8 7L9 6H10.500V7.500L14.500 10.500V15.500z" fill="url(#gbv)" stroke="#2c5d96" stroke-width="1.200"/></svg>
<svg class="i" style="left:6px;top:455px" width="16" height="16" viewBox="0 0 16 16"><path d="M3 6L5.500 1H13.500L11 6z" fill="#e00"/><path d="M5.500 3H11M5 4.500H10.500" stroke="#900" stroke-width=".8"/><path d="M1 7.500L3 6H13L15.500 7.500V11.500L13 14.500H2L0.500 12z" fill="#fff" stroke="#000" stroke-width="1.200"/><path d="M1 9H13V14M13 9L15.500 7.500" fill="none" stroke="#000"/><rect x="1" y="11.500" width="12" height="2.500" fill="#111"/><rect x="7" y="10" width="3" height="1.300" fill="#ee0"/><path d="M14 9.500L15 8.800M14 11.500L15 10.800" stroke="#888"/></svg>
<div class="hg" style="left:6px;top:479px;width:32px"></div>
<svg class="i" style="left:6px;top:487px" width="16" height="16" viewBox="0 0 16 16"><path d="M0 9.500H3.500V2.500H8.500V9.500H11" fill="none" stroke="#2c5d96" stroke-width="1.200"/><path d="M0 0.500H11" stroke="#2c5d96" stroke-width="1.200"/><rect x="12.500" y="1.500" width="2.500" height="9" fill="url(#gbv)" stroke="#2c5d96"/><rect x="0.500" y="12.500" width="10" height="2.500" fill="url(#gbv)" stroke="#2c5d96"/><rect x="3" y="13" width="1" height="1.500" fill="#fff"/><rect x="6" y="13" width="1" height="1.500" fill="#fff"/></svg>
<svg class="i" style="left:6px;top:511px" width="16" height="16" viewBox="0 0 16 16"><rect x="0.600" y="0.600" width="14.800" height="8.800" fill="url(#gb)" stroke="#2c5d96" stroke-width="1.200"/><path d="M4.500 9V4.500H6.500V9" fill="#fff" stroke="#2c5d96"/><rect x="0.600" y="11.600" width="14.800" height="3.300" fill="url(#gbv)" stroke="#2c5d96" stroke-width="1.200"/><rect x="3" y="12.500" width="1.500" height="1.500" fill="#fff"/><rect x="6" y="12.500" width="1.500" height="1.500" fill="#fff"/><path d="M0 5.500H16" stroke="#e00" stroke-width="1.300"/></svg>
<svg class="i" style="left:6px;top:535px" width="16" height="16" viewBox="0 0 16 16"><rect x="0" y="0" width="11" height="16" fill="url(#gb)" opacity=".7"/><path d="M0 5.500H3.500V16M8.500 16V0.500H3" fill="none" stroke="#2c5d96" stroke-width="1.100"/><path d="M0.500 5.500V16" stroke="#2c5d96" stroke-width="1"/><rect x="12.500" y="0.500" width="3" height="15" fill="url(#gbv)" stroke="#2c5d96"/><path d="M3.500 0V16" stroke="#e00" stroke-width="1.100"/></svg>
<svg class="i" style="left:6px;top:559px" width="16" height="16" viewBox="0 0 16 16"><rect x="0" y="0" width="11" height="16" fill="url(#gb)" opacity=".7"/><path d="M0 5.500H3.500V16M8.500 16V0.500H3" fill="none" stroke="#2c5d96" stroke-width="1.100"/><path d="M0.500 5.500V16" stroke="#2c5d96" stroke-width="1"/><rect x="12.500" y="0.500" width="3" height="15" fill="url(#gbv)" stroke="#2c5d96"/><path d="M3.500 0V16M7.500 0V16" stroke="#e00" stroke-width="1.100"/><path d="M0 6L3 8.500L0 11z" fill="#e00"/></svg>
<svg class="i" style="left:6px;top:583px" width="16" height="16" viewBox="0 0 16 16"><rect x="0.600" y="0.600" width="14.800" height="8.800" fill="url(#gb)" stroke="#2c5d96" stroke-width="1.200"/><path d="M4.500 9V4.500H6.500V9" fill="#fff" stroke="#2c5d96"/><rect x="0.600" y="11.600" width="14.800" height="3.300" fill="url(#gbv)" stroke="#2c5d96" stroke-width="1.200"/><rect x="3" y="12.500" width="1.500" height="1.500" fill="#fff"/><rect x="6" y="12.500" width="1.500" height="1.500" fill="#fff"/><path d="M0 5.500H16M0 9.500H16" stroke="#e00" stroke-width="1.200"/><path d="M8 2H13L10.500 5z" fill="#e00"/></svg>
<svg class="i" style="left:6px;top:607px" width="16" height="16" viewBox="0 0 16 16"><rect x="0" y="0" width="11" height="16" fill="url(#gb)" opacity=".7"/><path d="M0 5.500H3.500V16M8.500 16V0.500H3" fill="none" stroke="#2c5d96" stroke-width="1.100"/><rect x="12.500" y="0.500" width="3" height="7" fill="url(#gbv)" stroke="#2c5d96"/><path d="M11 10.500H16M11 12.500H16M11 14.500H16" stroke="#2c5d96"/><path d="M3.500 0V16M7.500 0V16" stroke="#e00" stroke-width="1.100"/><path d="M0 6L3 8.500L0 11z" fill="#e00"/></svg>
<div class="hg" style="left:6px;top:632px;width:32px"></div>
<svg class="i" style="left:6px;top:640px" width="16" height="16" viewBox="0 0 16 16"><rect x="0" y="12" width="15" height="4" fill="url(#gbv)" opacity=".7"/><rect x="1.500" y="2.500" width="9" height="11" fill="#fff" stroke="#2c5d96"/><rect x="2" y="3" width="8" height="3" fill="#e8383a"/><rect x="4.500" y="0.500" width="3" height="3" fill="#e00" stroke="#2c5d96"/><rect x="10.500" y="5.500" width="4" height="4" fill="#e8383a" stroke="#2c5d96"/><rect x="11" y="9" width="3" height="5" fill="#fff" stroke="#2c5d96" stroke-width=".8"/><rect x="3" y="8" width="2" height="2" fill="#1f4a7a"/><circle cx="9" cy="9.500" r="3.200" fill="#b9d3ea" stroke="#8a8a8a" stroke-width="1.200"/><path d="M11.500 12L15 15.500" stroke="#a0642a" stroke-width="1.800"/></svg>
<svg class="i" style="left:6px;top:664px" width="16" height="16" viewBox="0 0 16 16"><rect x="0" y="12" width="15" height="4" fill="url(#gbv)" opacity=".7"/><rect x="1.500" y="2.500" width="9" height="11" fill="#fff" stroke="#2c5d96"/><rect x="2" y="3" width="8" height="3" fill="#e8383a"/><rect x="4.500" y="0.500" width="3" height="3" fill="#e00" stroke="#2c5d96"/><rect x="10.500" y="5.500" width="4" height="4" fill="#e8383a" stroke="#2c5d96"/><rect x="11" y="9" width="3" height="5" fill="#fff" stroke="#2c5d96" stroke-width=".8"/><rect x="3" y="8" width="2" height="2" fill="#1f4a7a"/><circle cx="9" cy="9.500" r="3.200" fill="#b9d3ea" stroke="#8a8a8a" stroke-width="1.200"/><path d="M11.500 12L15 15.500" stroke="#a0642a" stroke-width="1.800"/><rect x="14" y="11" width="7.500" height="9" fill="#ff0"/><text x="15" y="19" font-family="Liberation Sans" font-weight="bold" font-size="9.500" fill="#000">1</text></svg>
<svg class="i" style="left:6px;top:688px" width="16" height="16" viewBox="0 0 16 16"><path d="M0.500 3.500L4 0.500H15.500L6.500 9.500V3.500z" fill="#f0a040" stroke="#000" stroke-width="1"/><rect x="0.600" y="3.600" width="5.800" height="6" fill="#e8801a" stroke="#000" stroke-width="1.200"/><path d="M2 5L5 8.500M1.500 7L3.500 9" stroke="#7a3a00" stroke-width=".8"/><path d="M6 2L12 1.500M7 4L10 2" stroke="#a85a10" stroke-width=".7"/><text x="7.700" y="16" font-family="Liberation Sans" font-weight="bold" font-size="8" fill="#000" textLength="8.500" lengthAdjust="spacingAndGlyphs">GL</text></svg>
<svg class="i" style="left:30px;top:648px" width="5" height="3" viewBox="0 0 5 3"><path d="M0 0h5L2.5 3z" fill="#000"/></svg>
<div style="left:43px;top:46px;width:199px;height:725px;background:#f0f0f0;box-sizing:border-box;border:2px solid #9a9a9a;border-right-width:1px;border-bottom-width:1px;"></div>
<div style="left:45px;top:48px;width:195px;height:1px;background:#f8f8f8;"></div>
<div style="left:45px;top:48px;width:1px;height:721px;background:#f8f8f8;"></div>
<div style="left:45px;top:769px;width:196px;height:1px;background:#f8f8f8;"></div>
<div style="left:240px;top:48px;width:1px;height:722px;background:#f8f8f8;"></div>
<div style="left:43px;top:771px;width:199px;height:1px;background:#fff;"></div>
<div style="left:49px;top:52px;width:187px;height:713px;background:#fff;box-sizing:border-box;border-top:1px solid #9a9a9a;border-left:1px solid #9a9a9a;border-right:1px solid #fff;border-bottom:1px solid #fff;"></div>
<div style="left:48px;top:51px;width:189px;height:1px;background:#f6f6f6;"></div>
<div style="left:48px;top:51px;width:1px;height:714px;background:#f6f6f6;"></div>
<div style="left:242px;top:46px;width:1px;height:926px;background:#fff;"></div>
<div style="left:59px;top:61px;width:1px;height:12px;background-image:linear-gradient(180deg,#808080 50%,transparent 50%);background-size:1px 2px;"></div>
<div style="left:59px;top:61px;width:10px;height:1px;background-image:linear-gradient(90deg,#808080 50%,transparent 50%);background-size:2px 1px;"></div>
<div style="left:65px;top:77px;width:4px;height:1px;background-image:linear-gradient(90deg,#808080 50%,transparent 50%);background-size:2px 1px;"></div>
<div style="left:78px;top:85px;width:1px;height:105px;background-image:linear-gradient(180deg,#808080 50%,transparent 50%);background-size:1px 2px;"></div>
<div style="left:79px;top:93px;width:9px;height:1px;background-image:linear-gradient(90deg,#808080 50%,transparent 50%);background-size:2px 1px;"></div>
<div style="left:79px;top:189px;width:9px;height:1px;background-image:linear-gradient(90deg,#808080 50%,transparent 50%);background-size:2px 1px;"></div>
<div style="left:84px;top:109px;width:4px;height:1px;background-image:linear-gradient(90deg,#808080 50%,transparent 50%);background-size:2px 1px;"></div>
<div style="left:97px;top:117px;width:1px;height:57px;background-image:linear-gradient(180deg,#808080 50%,transparent 50%);background-size:1px 2px;"></div>
<div style="left:98px;top:125px;width:9px;height:1px;background-image:linear-gradient(90deg,#808080 50%,transparent 50%);background-size:2px 1px;"></div>
<div style="left:98px;top:141px;width:9px;height:1px;background-image:linear-gradient(90deg,#808080 50%,transparent 50%);background-size:2px 1px;"></div>
<div style="left:98px;top:157px;width:9px;height:1px;background-image:linear-gradient(90deg,#808080 50%,transparent 50%);background-size:2px 1px;"></div>
<div style="left:98px;top:173px;width:9px;height:1px;background-image:linear-gradient(90deg,#808080 50%,transparent 50%);background-size:2px 1px;"></div>
<div style="left:55px;top:73px;width:9px;height:9px;background:#fff;box-sizing:border-box;border:1px solid #919191;"></div>
<div style="left:57px;top:77px;width:5px;height:1px;background:#000;"></div>
<div style="left:74px;top:105px;width:9px;height:9px;background:#fff;box-sizing:border-box;border:1px solid #919191;"></div>
<div style="left:76px;top:109px;width:5px;height:1px;background:#000;"></div>
<div style="left:107px;top:117px;width:57px;height:16px;background:#f0f0f0;"></div>
<div class="t " style="left:71px;top:54.00px;font-size:11.5px;letter-spacing:0.663px;color:#000;">DICAM: Construction libre</div>
<div class="t " style="left:71px;top:70.00px;font-size:11.5px;letter-spacing:0.445px;color:#000;">RC</div>
<div class="t " style="left:90px;top:86.00px;font-size:11.5px;letter-spacing:0.485px;color:#000;width:145px;overflow:hidden;">DIMUR - Conception Murs</div>
<div class="t " style="left:90px;top:102.00px;font-size:11.5px;letter-spacing:0.448px;color:#000;width:145px;overflow:hidden;">OSSATURE - Construction</div>
<div class="t " style="left:109.5px;top:118.00px;font-size:11.5px;letter-spacing:0.350px;color:#000;">RC Mur 1</div>
<div class="t " style="left:109.5px;top:134.00px;font-size:11.5px;letter-spacing:0.350px;color:#000;">RC Mur 2</div>
<div class="t " style="left:109.5px;top:150.00px;font-size:11.5px;letter-spacing:0.350px;color:#000;">RC Mur 3</div>
<div class="t " style="left:109.5px;top:166.00px;font-size:11.5px;letter-spacing:0.350px;color:#000;">RC Mur 4</div>
<div class="t " style="left:90px;top:182.00px;font-size:11.5px;letter-spacing:0.487px;color:#000;width:145px;overflow:hidden;">SOLIVAGE - Conception p</div>
<div style="left:43px;top:772px;width:199px;height:200px;background:#fff;box-sizing:border-box;border-left:1px solid #9a9a9a;border-top:1px solid #9a9a9a;"></div>
<div style="left:61px;top:832px;width:164px;height:82px;box-sizing:border-box;border:1px solid #000;"></div>
<div style="left:64px;top:835px;width:158px;height:76px;box-sizing:border-box;border:1px solid #000;"></div>
<div style="left:61px;top:833px;width:1px;height:80px;background:#f0f;"></div>
<div style="left:64px;top:835px;width:1px;height:76px;background:#f0f;"></div>
<svg class="i" style="left:54px;top:865px" width="8" height="16" viewBox="0 0 8 16"><path d="M0 0L7 7.5L0 15z" fill="#f0f"/></svg>
<div style="left:243px;top:46px;width:1553px;height:926px;background:#c8c8c8;box-sizing:border-box;border-left:2px solid #808080;border-top:2px solid #9a9a9a;"></div>
<div style="left:245px;top:48px;width:1317px;height:784px;background:#fff;"></div>
<div style="left:245px;top:832px;width:1550px;height:1px;background:#808080;"></div>
<div style="left:1562px;top:48px;width:1px;height:923px;background:#808080;"></div>
<svg class="i" style="left:245px;top:48px" width="1317" height="784" viewBox="245 48 1317 784">
<rect x="273.5" y="74.5" width="1259" height="734" fill="none" stroke="#00f" stroke-width="1"/>
<path d="M273.5 440.5 A 724.8 724.8 0 0 1 1532.5 440.5" fill="none" stroke="#000" stroke-width="1"/>
<path d="M272.5 808V716M273 807.5H364" stroke="#f00" fill="none" stroke-width="1"/>
<path d="M273.5 711.5L270 720L269 722L270.500 721.500L273.500 718.500L276.500 721.500L278 722L277 720z" fill="#f00"/>
<path d="M370.500 808.500L362 805L360 804L360.500 805.500L363.500 808.500L360.500 811.500L360 813L362 812z" fill="#f00"/>
<rect x="270.5" y="805.5" width="6" height="6" fill="none" stroke="#f00"/>
<path d="M273.5 74.5V808.5H1532.5" stroke="#00f" fill="none"/>
<text x="268" y="706" font-family="Liberation Sans" font-weight="bold" font-size="19.5" fill="#f00" stroke="#f00" stroke-width=".5" textLength="12" lengthAdjust="spacingAndGlyphs">Z</text>
<path d="M273.5 690V710" stroke="#00f"/>
<text x="376" y="816" font-family="Liberation Sans" font-weight="bold" font-size="19.5" fill="#f00" stroke="#f00" stroke-width=".5" textLength="14" lengthAdjust="spacingAndGlyphs">X</text>
<path d="M374 808.5H392" stroke="#00f"/>
</svg>
<div style="left:1656px;top:77px;width:1px;height:729px;background-image:linear-gradient(180deg,#000 1px,transparent 1px);background-size:1px 4px;"></div>
<div style="left:1698px;top:77px;width:1px;height:729px;background-image:linear-gradient(180deg,#000 1px,transparent 1px);background-size:1px 4px;"></div>
<div style="left:273px;top:834px;width:1px;height:91px;background:#707070;"></div>
<div style="left:315px;top:834px;width:1px;height:49px;background:#707070;"></div>
<div style="left:1490px;top:834px;width:1px;height:49px;background:#707070;"></div>
<div style="left:1532px;top:834px;width:1px;height:91px;background:#707070;"></div>
<div style="left:276px;top:882px;width:1255px;height:1px;background-image:linear-gradient(90deg,#000 1px,transparent 1px);background-size:4px 1px;"></div>
<div style="left:276px;top:924px;width:1255px;height:1px;background-image:linear-gradient(90deg,#000 1px,transparent 1px);background-size:4px 1px;"></div>
<div style="left:315px;top:884px;width:1px;height:39px;background-image:linear-gradient(180deg,#808080 1px,transparent 1px);background-size:1px 4px;"></div>
<div style="left:1490px;top:884px;width:1px;height:39px;background-image:linear-gradient(180deg,#808080 1px,transparent 1px);background-size:1px 4px;"></div>
<div style="left:1795px;top:46px;width:1px;height:925px;background:#fff;"></div>
<div style="left:1796px;top:46px;width:124px;height:926px;background:#f0f0f0;box-sizing:border-box;border-left:1px solid #a0a0a0;border-top:1px solid #9a9a9a;"></div>
<div style="left:1797px;top:47px;width:1px;height:323px;background:#9a9a9a;"></div>
<div style="left:1797px;top:370px;width:1px;height:601px;background:#f8f8f8;"></div>
<div style="left:1798px;top:47px;width:122px;height:1px;background:#fafafa;"></div>
<div style="left:1798px;top:47px;width:1px;height:322px;background:#fafafa;"></div>
<div style="left:1798px;top:369px;width:122px;height:1px;background:#9a9a9a;"></div>
<div style="left:1798px;top:370px;width:122px;height:1px;background:#fff;"></div>
<div style="left:1798px;top:48px;width:119px;height:60px;overflow:hidden;">
<div class="t " style="left:1.8px;top:0.00px;font-size:11.5px;letter-spacing:0.511px;color:#000;">Par 3 points</div>
<div class="t " style="left:1.8px;top:14.00px;font-size:11.5px;letter-spacing:0.841px;color:#000;">Départ + centre + fin</div>
<div class="t " style="left:1.8px;top:28.00px;font-size:11.5px;letter-spacing:0.812px;color:#000;">Départ + centre + angle</div>
<div class="t " style="left:1.8px;top:42.00px;font-size:11.5px;letter-spacing:0.807px;color:#000;">Départ + fin + flèche</div>
</div>
<div style="left:1918px;top:103px;width:1px;height:266px;background:#a0a0a0;"></div>
<div class="hg" style="left:1803px;top:375px;width:32px"></div>
<div class="hg" style="left:1845px;top:375px;width:32px"></div>
<svg class="i" style="left:1803px;top:384px" width="16" height="16" viewBox="0 0 16 16"><path d="M0.600 0.600H10.500V4.500H15.400V10.500H10.500V14.400H0.600z" fill="#eef4fa" stroke="#2c5d96" stroke-width="1.200"/><path d="M3 3H8V7H13V8.500H8V12H3z" fill="url(#gb)" stroke="#2c5d96" stroke-width="1.100"/></svg>
<svg class="i" style="left:1803px;top:408px" width="16" height="16" viewBox="0 0 16 16"><path d="M0.600 0.600H10.500V4.500H15.400V10.500H10.500V14.400H0.600z" fill="url(#gb)" stroke="#2c5d96" stroke-width="1.200"/><rect x="2.500" y="8.500" width="3" height="3.500" fill="#fff" stroke="#2c5d96"/></svg>
<svg class="i" style="left:1803px;top:432px" width="16" height="16" viewBox="0 0 16 16"><path d="M0.600 0.600H10.500V4.500H15.400V10.500H10.500V14.400H0.600z" fill="#e4eef7" stroke="#c8650a" stroke-width="1.200"/><path d="M3.500 0.500V14.500M6.500 0.500V14.500M9 0.500V14.500M0.500 4.500H10.500M0.500 7.500H10.500M0.500 10.500H6.500M10.500 6H15.500M10.500 7.500H15.500M10.500 9H15.500M12.500 4.500V10.500" stroke="#c8650a" stroke-width="1"/></svg>
<svg class="i" style="left:1803px;top:456px" width="16" height="16" viewBox="0 0 16 16"><path d="M0.600 0.600H10.500V4.500H15.400V10.500H10.500V14.400H0.600z" fill="url(#gb)" stroke="#2c5d96" stroke-width="1.200"/><path d="M4.500 0.500V14.500" stroke="#2c5d96" stroke-width="1.200"/><path d="M15 7.500H7M10 4.500L7 7.500L10 10.500" fill="none" stroke="#2c5d96" stroke-width="1.200"/></svg>
<svg class="i" style="left:1803px;top:480px" width="16" height="16" viewBox="0 0 16 16"><path d="M0.600 0.600H10.500V4.500H15.400V10.500H10.500V14.400H0.600z" fill="#eef4fa" stroke="#2c5d96" stroke-width="1.200"/><path d="M5.500 0.500V14.500M13 4.500V10.500" stroke="#2c5d96" stroke-width="1"/><path d="M0 2.500H10M0 4.500H10M0 6.500H10M0 8.500H10M0 10.500H10M0 12.500H10" stroke="#e00" stroke-width="1"/><path d="M8 4A3.500 3.500 0 0 1 8 11" fill="none" stroke="#2c5d96" stroke-width="1"/><path d="M11 5V10M14.500 5V10" stroke="#e00" stroke-width="1"/></svg>
<svg class="i" style="left:1803px;top:504px" width="16" height="16" viewBox="0 0 16 16"><path d="M2.500 8V15.500H13.500V8L8 2.500z" fill="#b5d0e8" stroke="#2c5d96" stroke-width="1.100"/><rect x="4.500" y="9" width="7" height="4.500" fill="#dcebf6" stroke="#5a6a7a" stroke-width="1"/><path d="M0 9.500L8 1.500L16 9.500" fill="none" stroke="#000" stroke-width="1.300"/><path d="M0.500 8L8 0.500L15.500 8" fill="none" stroke="#e00" stroke-width=".7"/></svg>
<svg class="i" style="left:1803px;top:528px" width="16" height="16" viewBox="0 0 16 16"><path d="M3 10L8 3.500L13 10z" fill="#d5e6f4"/><path d="M0 10.500L8 1.500L16 10.500M1 10.500H15M3.500 10.500V15.500M12.500 10.500V15.500M8 2V10.500M4 10L8 5.500L12 10M3.500 13.500L6 10.500M12.500 13.500L10 10.500" fill="none" stroke="#c8650a" stroke-width="1.300"/></svg>
<svg class="i" style="left:1803px;top:552px" width="16" height="16" viewBox="0 0 16 16"><rect x="0" y="12" width="16" height="4" fill="url(#gbv)" opacity=".8"/><rect x="1.500" y="2.500" width="9" height="11" fill="#fff" stroke="#2c5d96"/><rect x="2" y="3" width="8" height="3" fill="#e8383a"/><rect x="4.500" y="0.500" width="3" height="3" fill="#e00" stroke="#2c5d96"/><rect x="10.500" y="5.500" width="4" height="8" fill="#fff" stroke="#2c5d96"/><rect x="11" y="6" width="3" height="3" fill="#e8383a"/><rect x="3" y="8" width="2" height="2" fill="#1f4a7a"/><path d="M6.500 13V9H8.500" fill="none" stroke="#2c5d96"/></svg>
<svg class="i" style="left:1803px;top:576px" width="16" height="16" viewBox="0 0 16 16"><defs><linearGradient id="gdb" x1="0" y1="0" x2="1" y2="0"><stop offset="0" stop-color="#4f86c6"/><stop offset=".45" stop-color="#dcebf8"/><stop offset="1" stop-color="#4f86c6"/></linearGradient></defs><path d="M1 3.500V13C1 17 15 17 15 13V3.500z" fill="url(#gdb)" stroke="#3a6ea5" stroke-width="1"/><ellipse cx="8" cy="3.500" rx="7" ry="3" fill="#cfe2f4" stroke="#3a6ea5"/><path d="M1 7C1 10.500 15 10.500 15 7M1 10.500C1 14 15 14 15 10.500" fill="none" stroke="#3a6ea5" stroke-width="1"/></svg>
<svg class="i" style="left:1803px;top:600px" width="16" height="16" viewBox="0 0 16 16"><path d="M0.600 3V7M15.400 3V7M0.500 5H15.500M5.500 2.500H10.500" stroke="#d00" stroke-width="1.200"/><rect x="0.650" y="9.650" width="14.700" height="4.200" fill="url(#gov)" stroke="#000" stroke-width="1.300"/><rect x="1.500" y="10.500" width="6" height="2.500" fill="#ffe2b8" opacity=".8"/></svg>
<svg class="i" style="left:1845px;top:384px" width="16" height="16" viewBox="0 0 16 16"><rect x="4.650" y="0.650" width="5.700" height="14" fill="url(#gov)" stroke="#000" stroke-width="1.300"/><path d="M1 2L14 13M14 2L1 13" stroke="#e8242a" stroke-width="2.2" stroke-linecap="round" opacity=".9"/></svg>
<svg class="i" style="left:1845px;top:408px" width="16" height="16" viewBox="0 0 16 16"><rect x="2.650" y="0.650" width="10.700" height="14" fill="url(#gp)" stroke="#000" stroke-width="1.300"/><path d="M1 1.5L14 13M14 1.5L1 13" stroke="#e8242a" stroke-width="2.2" stroke-linecap="round" opacity=".9"/></svg>
<svg class="i" style="left:1845px;top:432px" width="16" height="16" viewBox="0 0 16 16"><rect x="6" y="5" width="10" height="10.500" fill="url(#gb)"/><path d="M5.500 15.500V4.500H16" fill="none" stroke="#00f" stroke-width="1.300"/><path d="M0.5 1L7 8M7 1L0.5 8" stroke="#e8242a" stroke-width="1.4" stroke-linecap="round" opacity=".9"/></svg>
<svg class="i" style="left:1845px;top:456px" width="16" height="16" viewBox="0 0 16 16"><rect x="0" y="0" width="16" height="7" fill="url(#gb)"/><path d="M0 0.500H16M0 7.200H16" stroke="#2c5d96" stroke-width="1.100"/><path d="M2 0L5.500 4L9 0" fill="none" stroke="#e00" stroke-width="1.200"/><path d="M10.500 0V7" stroke="#e00" stroke-dasharray="2 1" stroke-width="1.200"/><path d="M1.5 7.5L11 15M11 7.5L1.5 15" stroke="#e8242a" stroke-width="1.6" stroke-linecap="round" opacity=".9"/><text x="11.500" y="15.500" font-family="Liberation Sans" font-size="8" fill="#000">1</text></svg>
<svg class="i" style="left:1845px;top:480px" width="16" height="16" viewBox="0 0 16 16"><circle cx="5" cy="11" r="3" fill="#e88" opacity=".7"/><path d="M6.500 15.500L15.500 6.500V15.500z" fill="#35b84a" stroke="#000" stroke-width="1.100"/><path d="M10 14.500L14.500 10V14.500z" fill="#9fe3a6"/><path d="M1 1L13 13M13 1L1 13" stroke="#e8242a" stroke-width="2" stroke-linecap="round" opacity=".9"/></svg>
<svg class="i" style="left:1845px;top:504px" width="16" height="16" viewBox="0 0 16 16"><path d="M1.500 14.500L14.500 1.500" stroke="#000" stroke-width="1.400"/><rect x="0" y="13" width="3" height="3" fill="#0a64d6"/><rect x="13" y="0" width="3" height="3" fill="#0a64d6"/><path d="M7 6L15 15M15 6L7 15" stroke="#e8242a" stroke-width="1.4" stroke-linecap="round" opacity=".9"/></svg>
<svg class="i" style="left:1845px;top:528px" width="16" height="16" viewBox="0 0 16 16"><text x="1.500" y="6.500" font-family="Liberation Sans" font-size="8.500" fill="#d00">1</text><path d="M1 8.500H5M8 8.500H12" stroke="#0a64d6" stroke-width="1.100"/><path d="M0.600 10V15.500M6.500 10V15.500M15.400 10V15.500M0.500 12.800H15.500" stroke="#0a64d6" stroke-width="1.300"/><path d="M8 8L15.5 15M15.5 8L8 15" stroke="#e8242a" stroke-width="1.4" stroke-linecap="round" opacity=".9"/></svg>
<svg class="i" style="left:1845px;top:552px" width="16" height="16" viewBox="0 0 16 16"><defs><pattern id="ht2" width="2.800" height="2.800" patternUnits="userSpaceOnUse" patternTransform="rotate(-45)"><rect width="1.400" height="2.800" fill="#2c5d96"/></pattern></defs><path d="M1.500 3.500H14.500V11L11 14.500H1.500z" fill="#fff"/><path d="M1.500 3.500H14.500V11L11 14.500H1.500z" fill="url(#ht2)" stroke="#2c5d96"/><path d="M2 2.5L13 13M13 2.5L2 13" stroke="#e8242a" stroke-width="1.7" stroke-linecap="round" opacity=".9"/></svg>
<svg class="i" style="left:1845px;top:576px" width="16" height="16" viewBox="0 0 16 16"><path d="M0 14.500H2M8 14.500H16" stroke="#000" stroke-width="1"/><path d="M15 1.500L8.500 9" stroke="#f0c81e" stroke-width="3.600"/><path d="M15.500 0.500L13.500 2.800" stroke="#d8a800" stroke-width="3.600" opacity=".5"/><path d="M8.500 9L6.500 11.300" stroke="#b0b8c0" stroke-width="3.600"/><path d="M6.500 11.300L4.500 13.500" stroke="#f08080" stroke-width="3.600" stroke-linecap="round"/></svg>
<div style="left:43px;top:971px;width:1877px;height:1px;background:#fff;"></div>
<div style="left:0px;top:972px;width:1920px;height:1px;background:#a0a0a0;"></div>
<div style="left:0px;top:973px;width:1920px;height:37px;background:#fff;"></div>
<div style="left:0px;top:973px;width:1px;height:37px;background:#9a9a9a;"></div>
<div class="t " style="left:11.5px;top:974.00px;font-size:11.5px;letter-spacing:0.646px;color:#6d6d6d;">Création d&#x27;un arc de cercle par 2 points et la flèche de l&#x27;arc.</div>
<div class="t " style="left:11.5px;top:990.00px;font-size:11.5px;letter-spacing:0.677px;color:#6d6d6d;">le 1er au début de l&#x27;arc,le 2nd à son extrémité, puis la flèche saisie graphiquement ou numériquement</div>
<div class="vg" style="left:4px;top:1016px;height:16px"></div>
<svg class="i" style="left:12px;top:1016px" width="16" height="16" viewBox="0 0 16 16"><path d="M0.500 8.500L6.500 12.500H16.500L10.500 8.500z" fill="#cfe0ee" stroke="#2c5d96"/><path d="M0.500 5.500L6.500 9.500H16.500L10.500 5.500z" fill="#dbe9f4" stroke="#2c5d96"/><path d="M0.500 2.500L6.500 6.500H16.500L10.500 2.500z" fill="url(#gb)" stroke="#2c5d96"/></svg>
<div style="left:33px;top:1013px;width:120px;height:21px;background:#fff;"></div>
<div style="left:33px;top:1013px;width:119px;height:1px;background:#8e8e8e;"></div>
<div style="left:33px;top:1013px;width:1px;height:20px;background:#8e8e8e;"></div>
<div style="left:34px;top:1014px;width:118px;height:1px;background:#e3e3e3;"></div>
<div style="left:34px;top:1014px;width:1px;height:19px;background:#e3e3e3;"></div>
<div style="left:135px;top:1015px;width:16px;height:17px;background:#f0f0f0;box-sizing:border-box;border-top:1px solid #fff;border-left:1px solid #fff;border-right:1px solid #8a8a8a;border-bottom:1px solid #707070;"></div>
<div style="left:136px;top:1030px;width:14px;height:1px;background:#a8a8a8;"></div>
<svg class="i" style="left:140px;top:1022px" width="7" height="4" viewBox="0 0 7 4"><path d="M0 0h7L3.5 4z" fill="#000"/></svg>
<div class="t " style="left:37.5px;top:1017.00px;font-size:11.5px;letter-spacing:0.478px;color:#000;">Standard</div>
<div style="left:153px;top:1013px;width:121px;height:21px;background:#fff;"></div>
<div style="left:153px;top:1013px;width:120px;height:1px;background:#8e8e8e;"></div>
<div style="left:153px;top:1013px;width:1px;height:20px;background:#8e8e8e;"></div>
<div style="left:154px;top:1014px;width:119px;height:1px;background:#e3e3e3;"></div>
<div style="left:154px;top:1014px;width:1px;height:19px;background:#e3e3e3;"></div>
<div style="left:255px;top:1015px;width:16px;height:17px;background:#f0f0f0;box-sizing:border-box;border-top:1px solid #fff;border-left:1px solid #fff;border-right:1px solid #8a8a8a;border-bottom:1px solid #707070;"></div>
<div style="left:256px;top:1030px;width:14px;height:1px;background:#a8a8a8;"></div>
<svg class="i" style="left:260px;top:1022px" width="7" height="4" viewBox="0 0 7 4"><path d="M0 0h7L3.5 4z" fill="#000"/></svg>
<div class="t " style="left:157.5px;top:1017.00px;font-size:11.5px;letter-spacing:0.561px;color:#000;">Tous les calques</div>
<svg class="i" style="left:277px;top:1016px" width="16" height="16" viewBox="0 0 16 16"><text x="-0.500" y="8" font-family="Liberation Sans" font-weight="bold" font-size="10.500" fill="#1f4a7a">M</text><path d="M8.500 4.500H14" stroke="#d00" stroke-width="1.300"/><path d="M16 4.500L12 2.500V6.500z" fill="#d00"/><path d="M0.600 10V16M6.500 10V16M15.500 10V16M0.500 12.500H15.500" stroke="#0a64d6" stroke-width="1.300"/></svg>
<svg class="i" style="left:302px;top:1016px" width="16" height="16" viewBox="0 0 16 16"><rect x="0.800" y="0.800" width="14.400" height="10.400" fill="#f4f8fb" stroke="#000" stroke-width="1.500"/><rect x="9" y="2" width="5" height="4" fill="url(#gb)"/><path d="M2.500 3H8M2.500 5H6M2.500 9H5" stroke="#000" stroke-dasharray="1 1" stroke-width=".8"/><path d="M3 9.500L9.500 2" stroke="#e00" stroke-width="1.400"/><path d="M5.500 8.500L8 6" stroke="#0a64d6" stroke-width="1.200"/><rect x="7" y="7" width="9" height="9" fill="#f0f0f0"/><path d="M7.5 16V7.5H16" fill="none" stroke="#2c5d96"/><path d="M9 9.5H16M9 11.5H16M9 13.5H16" stroke="#2c5d96" fill="none"/></svg>
<div style="left:327px;top:1012px;width:1px;height:24px;background:#8c8c8c;"></div>
<svg class="i" style="left:335px;top:1016px" width="16" height="16" viewBox="0 0 16 16"><defs><pattern id="ht" width="2.500" height="2.500" patternUnits="userSpaceOnUse" patternTransform="rotate(-45)"><rect width="1.250" height="2.500" fill="#2c5d96"/></pattern></defs><rect x="4" y="4" width="9" height="9" fill="#fff"/><rect x="4" y="4" width="9" height="9" fill="url(#ht)"/><path d="M3.500 0V16M13 0V16M0 3.200H16M0 13.500H16" stroke="#2c5d96" stroke-width="1.500"/><path d="M12 6L15 2" stroke="#2c5d96" stroke-width="1"/></svg>
<svg class="i" style="left:360px;top:1016px" width="16" height="16" viewBox="0 0 16 16"><path d="M0.500 4.500H13.500V11L9.500 15.500H0.500z" fill="#fff"/><path d="M0.500 4.500H13.500V11L9.500 15.500H0.500z" fill="url(#ht)" stroke="#2c5d96" stroke-width="1"/><path d="M11 1L8.500 9" stroke="#f0d020" stroke-width="2.200"/><path d="M11.800 0L10.500 2.500" stroke="#1f4a7a" stroke-width="2.400"/><rect x="11.500" y="0.500" width="1.500" height="1.500" fill="#e00"/><path d="M8.200 8.500L7.800 10.500L9.300 9.200z" fill="#333"/></svg>
<div style="left:385px;top:1012px;width:1px;height:24px;background:#8c8c8c;"></div>
<svg class="i" style="left:393px;top:1016px" width="16" height="16" viewBox="0 0 16 16"><path d="M1 1.500H4.500M9 1.500H13" stroke="#e00" stroke-width="1.200"/><path d="M0.600 4V10M6.500 4V10M15.500 4V9M0.500 6.500H15.500" stroke="#e00" stroke-width="1.300" fill="none"/><rect x="9" y="8.500" width="7" height="7.500" fill="#f0f0f0"/><path d="M9.5 16V8.5H16" fill="none" stroke="#2c5d96"/><path d="M11 10.5H16M11 12.5H16M11 14.5H16" stroke="#2c5d96" fill="none"/></svg>
<div style="left:414px;top:1013px;width:121px;height:21px;background:#fff;"></div>
<div style="left:414px;top:1013px;width:120px;height:1px;background:#8e8e8e;"></div>
<div style="left:414px;top:1013px;width:1px;height:20px;background:#8e8e8e;"></div>
<div style="left:415px;top:1014px;width:119px;height:1px;background:#e3e3e3;"></div>
<div style="left:415px;top:1014px;width:1px;height:19px;background:#e3e3e3;"></div>
<div style="left:516px;top:1015px;width:16px;height:17px;background:#f0f0f0;box-sizing:border-box;border-top:1px solid #fff;border-left:1px solid #fff;border-right:1px solid #8a8a8a;border-bottom:1px solid #707070;"></div>
<div style="left:517px;top:1030px;width:14px;height:1px;background:#a8a8a8;"></div>
<svg class="i" style="left:521px;top:1022px" width="7" height="4" viewBox="0 0 7 4"><path d="M0 0h7L3.5 4z" fill="#000"/></svg>
<svg class="i" style="left:538px;top:1016px" width="16" height="16" viewBox="0 0 16 16"><path d="M1 6L4.500 0.500L8 6M2.500 4H6.500" fill="none" stroke="#e00" stroke-width="1.200"/><path d="M2 8.500H15" stroke="#0a64d6" stroke-dasharray="2.500 1" stroke-width="1.200"/><path d="M6.500 9.500V16M10.500 9.500V16" stroke="#0a64d6" stroke-dasharray="1 1" stroke-width="1.200"/><path d="M0.600 10V16M15.400 10V16M0.500 12.500H15.500" stroke="#e00" stroke-width="1.300"/></svg>
<svg class="i" style="left:563px;top:1016px" width="16" height="16" viewBox="0 0 16 16"><path d="M1.500 7.500H5M9.500 7.500H13" stroke="#e00" stroke-width="1.200"/><path d="M0.600 10V16M6.500 10V16M15.400 10V16M0.500 12.500H15.500" stroke="#e00" stroke-width="1.300"/></svg>
<svg class="i" style="left:588px;top:1016px" width="16" height="16" viewBox="0 0 16 16"><path d="M6.500 3V8M15 3V8" stroke="#0a64d6" stroke-width="1.300" stroke-dasharray="2.300 1"/><path d="M0.600 10V16M6.500 10V16M15.400 10V16M0.500 12.500H15.500" stroke="#0a64d6" stroke-width="1.300"/></svg>
<svg class="i" style="left:613px;top:1016px" width="16" height="16" viewBox="0 0 16 16"><path d="M6.500 3V6.500M6.500 12V15.500" stroke="#e00" stroke-width="1.300"/><path d="M9 0.600H15M9 9.500H15M9 15.400H15M11.800 0.500V15.500" stroke="#e00" stroke-width="1.300"/></svg>
<svg class="i" style="left:638px;top:1016px" width="16" height="16" viewBox="0 0 16 16"><path d="M2 0.600H7M2 9.500H7" stroke="#0a64d6" stroke-width="1.300"/><path d="M9 0.600H15M9 9.500H15M9 15.400H15M11.800 0.500V15.500" stroke="#0a64d6" stroke-width="1.300"/></svg>
<svg class="i" style="left:663px;top:1016px" width="16" height="16" viewBox="0 0 16 16"><g transform="translate(8.200,9.400) rotate(-43)" fill="none" stroke="#e00" stroke-width="1.300"><path d="M-6.600 0H6.600M-6.600 -2.800V2.800M6.600 -2.800V2.800M-1 -1.500V1.500M-6 -4H-3.500M-0.500 -4H3.500"/></g></svg>
<svg class="i" style="left:688px;top:1016px" width="16" height="16" viewBox="0 0 16 16"><g transform="translate(8.100,9.600) rotate(-43)" fill="none" stroke="#0a64d6" stroke-width="1.300"><path d="M-6.500 0H6.500M-6.500 -2.900V2.900M6.500 -2.900V2.900M-0.700 -1.500V1.500M-0.700 -7.300V-4.600M6.300 -7.700V-4.900"/></g></svg>
<svg class="i" style="left:713px;top:1016px" width="16" height="16" viewBox="0 0 16 16"><path d="M11.700 1.200L0.500 8.300L11.700 15.800" fill="none" stroke="#0a64d6" stroke-width="1.200" stroke-dasharray="3.500 0.700"/><path d="M8.400 3.900C10.500 6.500 11 10 9.500 13" fill="none" stroke="#0a64d6" stroke-width="1.100"/><path d="M7.500 8.800L10.500 7.800" stroke="#0a64d6"/><path d="M12.300 3.200H16.300M12.300 5.500H16.300" stroke="#0a64d6" stroke-width="1.200"/></svg>
<svg class="i" style="left:738px;top:1016px" width="16" height="16" viewBox="0 0 16 16"><path d="M0 7.800H16.300M10.300 5.200H16.300" stroke="#0a64d6" stroke-width="1.300"/><path d="M0.500 8L5.200 13.800L10 8" fill="none" stroke="#0a64d6" stroke-width="1.300"/><path d="M0 14H6" stroke="#000" stroke-width="1.200" stroke-dasharray="1 1"/></svg>
<div style="left:763px;top:1012px;width:1px;height:24px;background:#8c8c8c;"></div>
<svg class="i" style="left:772px;top:1016px" width="16" height="16" viewBox="0 0 16 16"><text x="-1" y="15" font-family="Liberation Serif" font-size="18.5" fill="#000">A</text><rect x="8" y="8" width="8" height="8" fill="#f0f0f0"/><path d="M8.5 16V8.5H16" fill="none" stroke="#2c5d96"/><path d="M10 10.5H16M10 12.5H16M10 14.5H16" stroke="#2c5d96" fill="none"/></svg>
<svg class="i" style="left:797px;top:1016px" width="16" height="16" viewBox="0 0 16 16"><text x="-0.5" y="15" font-family="Liberation Serif" font-size="19.5" fill="#000">A</text></svg>
<svg class="i" style="left:822px;top:1016px" width="16" height="16" viewBox="0 0 16 16"><text x="-0.5" y="15" font-family="Liberation Serif" font-size="19" fill="#000">A</text><text x="11" y="7" font-family="Liberation Sans" font-size="9.500" fill="#000">1</text></svg>
<svg class="i" style="left:846px;top:1016px" width="16" height="16" viewBox="0 0 16 16"><text x="2.5" y="16" font-family="Liberation Serif" font-size="14.5" fill="#1a1aff">A</text><path d="M0.700 4V0.700H4M1 1L4.500 5V7.500" fill="none" stroke="#1a1aff" stroke-width="1.300"/></svg>
<svg class="i" style="left:871px;top:1016px" width="16" height="16" viewBox="0 0 16 16"><text x="2.5" y="16" font-family="Liberation Serif" font-size="14.5" fill="#1a1aff">A</text><path d="M0.700 4V0.700H4M1 1L4.500 5V7.500" fill="none" stroke="#1a1aff" stroke-width="1.300"/><text x="12" y="7" font-family="Liberation Sans" font-size="9.500" fill="#000">1</text></svg>
<div class="vg" style="left:897px;top:1016px;height:16px"></div>
<svg class="i" style="left:905px;top:1016px" width="16" height="16" viewBox="0 0 16 16"><path d="M1.500 14.500L14.500 1.500" stroke="#000" stroke-width="1.400"/><rect x="0" y="13" width="3" height="3" fill="#0a64d6"/><rect x="13" y="0" width="3" height="3" fill="#0a64d6"/><rect x="9" y="8" width="7" height="8" fill="#f0f0f0"/><path d="M9.5 16V8.5H16" fill="none" stroke="#2c5d96"/><path d="M11 10.5H16M11 12.5H16M11 14.5H16" stroke="#2c5d96" fill="none"/></svg>
<div style="left:926px;top:1013px;width:121px;height:21px;background:#fff;"></div>
<div style="left:926px;top:1013px;width:120px;height:1px;background:#8e8e8e;"></div>
<div style="left:926px;top:1013px;width:1px;height:20px;background:#8e8e8e;"></div>
<div style="left:927px;top:1014px;width:119px;height:1px;background:#e3e3e3;"></div>
<div style="left:927px;top:1014px;width:1px;height:19px;background:#e3e3e3;"></div>
<div style="left:1028px;top:1015px;width:16px;height:17px;background:#f0f0f0;box-sizing:border-box;border-top:1px solid #fff;border-left:1px solid #fff;border-right:1px solid #8a8a8a;border-bottom:1px solid #707070;"></div>
<div style="left:1029px;top:1030px;width:14px;height:1px;background:#a8a8a8;"></div>
<svg class="i" style="left:1033px;top:1022px" width="7" height="4" viewBox="0 0 7 4"><path d="M0 0h7L3.5 4z" fill="#000"/></svg>
<div class="t " style="left:930.5px;top:1017.00px;font-size:11.5px;letter-spacing:0.548px;color:#000;">Depuis calque</div>
<svg class="i" style="left:1051px;top:1016px" width="16" height="16" viewBox="0 0 16 16"><rect x="5" y="5" width="6" height="7" fill="#a9c3dc"/><path d="M6.500 3V14M9.700 3V14M2 6.700H13.500M2 10.300H13.500" stroke="#2c5d96" stroke-width="1.300"/></svg>
<svg class="i" style="left:1075px;top:1016px" width="16" height="16" viewBox="0 0 16 16"><path d="M2 13L13 2" stroke="#000" stroke-dasharray="1.500 1.500"/><rect x="0.6" y="12.6" width="2.300" height="2.300" fill="#fff" stroke="#000" stroke-width="1.100"/><rect x="12.6" y="0.6" width="2.300" height="2.300" fill="#fff" stroke="#000" stroke-width="1.100"/><rect x="4.1" y="9.1" width="2.300" height="2.300" fill="#fff" stroke="#0a64d6" stroke-width="1.100"/><rect x="9.1" y="4.1" width="2.300" height="2.300" fill="#fff" stroke="#0a64d6" stroke-width="1.100"/></svg>
<svg class="i" style="left:1100px;top:1016px" width="16" height="16" viewBox="0 0 16 16"><path d="M1.500 13V8C2 4 6 1.500 9 1.500H13" fill="none" stroke="#000" stroke-width="1.100"/><rect x="0.6" y="13.1" width="2.300" height="2.300" fill="#fff" stroke="#000" stroke-width="1.100"/><rect x="13.6" y="0.6" width="2.300" height="2.300" fill="#fff" stroke="#000" stroke-width="1.100"/><rect x="2.1" y="6.1" width="2.300" height="2.300" fill="#fff" stroke="#0a64d6" stroke-width="1.100"/><rect x="7.1" y="1.1" width="2.300" height="2.300" fill="#fff" stroke="#0a64d6" stroke-width="1.100"/></svg>
<svg class="i" style="left:1125px;top:1016px" width="16" height="16" viewBox="0 0 16 16"><path d="M1.500 14.500L14.500 1.500" stroke="#000" stroke-width="1.400"/><rect x="0" y="13" width="3" height="3" fill="#0a64d6"/><rect x="13" y="0" width="3" height="3" fill="#0a64d6"/></svg>
<svg class="i" style="left:1150px;top:1016px" width="16" height="16" viewBox="0 0 16 16"><path d="M2.500 14L13.500 2.500" stroke="#000" stroke-width="1.400"/><path d="M0.500 10.500L6.500 0M5.500 16L16 9.500" stroke="#000" stroke-width=".8"/><rect x="1" y="12.5" width="3" height="3" fill="#0a64d6"/><rect x="12" y="1" width="3" height="3" fill="#0a64d6"/></svg>
<svg class="i" style="left:1175px;top:1016px" width="16" height="16" viewBox="0 0 16 16"><defs><radialGradient id="gcr" cx=".35" cy=".3" r=".8"><stop offset="0" stop-color="#fff"/><stop offset="1" stop-color="#b7cfe2"/></radialGradient></defs><circle cx="7.500" cy="8.500" r="6.800" fill="url(#gcr)" stroke="#000" stroke-width="1.500"/><path d="M7.500 8.500L12 3.500" stroke="#0a64d6" stroke-width="1.300"/><rect x="6" y="7" width="3" height="3" fill="#0a64d6"/></svg>
<svg class="i" style="left:1200px;top:1016px" width="16" height="16" viewBox="0 0 16 16"><path d="M1.500 14.500C2 7 8 2 14.500 1.500" fill="none" stroke="#000" stroke-width="1.400"/><path d="M1.500 14.500L14.500 1.500" stroke="#0a64d6" stroke-width="1"/><path d="M6 6.500L8 8" stroke="#0a64d6" stroke-width=".8"/><rect x="0" y="13" width="3" height="3" fill="#0a64d6"/><rect x="13" y="0" width="3" height="3" fill="#0a64d6"/></svg>
<svg class="i" style="left:1225px;top:1016px" width="16" height="16" viewBox="0 0 16 16"><path d="M1.500 14.500L14.500 1.500" stroke="#000" stroke-width="1.500"/><path d="M5.500 1.500L2.500 10.500" stroke="#f0d020" stroke-width="2.400"/><path d="M5.500 1.500L2.500 10.500" stroke="#1f4a7a" stroke-width="3.200" stroke-dasharray="0 1 0" fill="none" opacity="0"/><path d="M4.200 0L7 1M3.500 1.500L2 9.500" stroke="#1f4a7a" stroke-width="1"/><rect x="5" y="0" width="2" height="2" fill="#e00"/><rect x="0" y="13" width="3" height="3" fill="#0a64d6"/><rect x="13" y="0" width="3" height="3" fill="#0a64d6"/></svg>
<div style="left:1250px;top:1012px;width:1px;height:24px;background:#8c8c8c;"></div>
<svg class="i" style="left:1257px;top:1016px" width="16" height="16" viewBox="0 0 16 16"><path d="M0.700 14.300H5.800V2.500z" fill="url(#gbl)" stroke="#000" stroke-width="1.100"/><path d="M9.300 2.500V14.300H14.500z" fill="url(#gbl)" stroke="#000" stroke-width="1.100"/><path d="M7.500 0V16" stroke="#0a64d6" stroke-width="1"/></svg>
<svg class="i" style="left:1283px;top:1016px" width="16" height="16" viewBox="0 0 16 16"><path d="M0.800 15.200V7H4V1H12V7H15.200V15.200z" fill="#fff" stroke="#000" stroke-width="1.500"/><path d="M2.700 13.300V9H6V3H10V9H13.300V13.300z" fill="url(#gbv)" stroke="#0a64d6" stroke-width="1.300"/></svg>
<svg class="i" style="left:1308px;top:1016px" width="16" height="16" viewBox="0 0 16 16"><path d="M0 8H5.500" stroke="#000" stroke-width="2"/><path d="M3 16L11 0" stroke="#0a64d6" stroke-width="1.300"/><path d="M8 8H16" stroke="#0a64d6" stroke-width="1.800" stroke-dasharray="1.500 1"/></svg>
<svg class="i" style="left:1333px;top:1016px" width="16" height="16" viewBox="0 0 16 16"><path d="M0 8H5" stroke="#000" stroke-width="2"/><path d="M8.500 16L16 1" stroke="#0a64d6" stroke-width="1.300"/><path d="M6 8H11" stroke="#0a64d6" stroke-width="1.800" stroke-dasharray="1.500 1"/></svg>
<svg class="i" style="left:1358px;top:1016px" width="16" height="16" viewBox="0 0 16 16"><path d="M1 16V9M8 1.500H15" stroke="#000" stroke-width="2"/><path d="M1 9V1.500H8" fill="none" stroke="#0a64d6" stroke-width="2"/></svg>
<div style="left:1383px;top:1012px;width:1px;height:24px;background:#8c8c8c;"></div>
<svg class="i" style="left:1391px;top:1016px" width="16" height="16" viewBox="0 0 16 16"><path d="M1 8H14M7.500 1.500V14.500" stroke="#2c5d96" stroke-width="1.200"/><path d="M0 8L3 5.500V10.500zM15 8L12 5.500V10.500zM7.500 0.500L5 3.500H10zM7.500 15.500L5 12.500H10z" fill="#2c5d96"/></svg>
<svg class="i" style="left:1416px;top:1016px" width="16" height="16" viewBox="0 0 16 16"><path d="M4.500 4A6 6 0 1 1 2.500 7" fill="none" stroke="#2c5d96" stroke-width="2"/><path d="M1.500 1H8L4 6z" fill="#2c5d96"/></svg>
<div style="left:1px;top:1038px;width:1518px;height:18px;background:#f0f0f0;box-sizing:border-box;border-top:1px solid #a0a0a0;border-left:1px solid #a0a0a0;border-right:1px solid #fff;"></div>
<div style="left:1522px;top:1038px;width:77px;height:18px;background:#f0f0f0;box-sizing:border-box;border-top:1px solid #a0a0a0;border-left:1px solid #a0a0a0;border-right:1px solid #fff;"></div>
<div class="t " style="left:1526px;top:1041.00px;font-size:11.5px;letter-spacing:0.522px;color:#000;">65424 K</div>
<div style="left:1602px;top:1038px;width:17px;height:18px;background:#f0f0f0;box-sizing:border-box;border-top:1px solid #a0a0a0;border-left:1px solid #a0a0a0;border-right:1px solid #fff;"></div>
<div style="left:1622px;top:1038px;width:27px;height:18px;background:#f0f0f0;box-sizing:border-box;border-top:1px solid #a0a0a0;border-left:1px solid #a0a0a0;border-right:1px solid #fff;"></div>
<div class="t " style="left:1626px;top:1041.00px;font-size:11.5px;letter-spacing:-0.580px;color:#000;">m</div>
<div style="left:1652px;top:1038px;width:127px;height:18px;background:#f0f0f0;box-sizing:border-box;border-top:1px solid #a0a0a0;border-left:1px solid #a0a0a0;border-right:1px solid #fff;"></div>
<div class="t " style="left:1656.5px;top:1041.00px;font-size:11.5px;letter-spacing:0.371px;color:#000;">RC 0 Mur 1</div>
<div style="left:1782px;top:1038px;width:136px;height:18px;background:#f0f0f0;box-sizing:border-box;border-top:1px solid #a0a0a0;border-left:1px solid #a0a0a0;border-right:1px solid #fff;"></div>
<div class="t " style="left:1786px;top:1041.00px;font-size:11.5px;letter-spacing:0.836px;color:#000;">H  0°/ 90°/270°</div>
<div style="left:779px;top:21px;width:155px;height:318px;background:rgba(0,0,0,0.28);filter:blur(1.5px);"></div>
<div style="left:776px;top:18px;width:155px;height:318px;background:#f0f0f0;box-sizing:border-box;border:1px solid #979797;"></div>
<div style="left:780px;top:41px;width:148px;height:1px;background:#a0a0a0;"></div>
<div style="left:780px;top:42px;width:148px;height:1px;background:#fff;"></div>
<div style="left:780px;top:131px;width:148px;height:1px;background:#a0a0a0;"></div>
<div style="left:780px;top:132px;width:148px;height:1px;background:#fff;"></div>
<div style="left:780px;top:189px;width:148px;height:1px;background:#a0a0a0;"></div>
<div style="left:780px;top:190px;width:148px;height:1px;background:#fff;"></div>
<div style="left:780px;top:279px;width:148px;height:1px;background:#a0a0a0;"></div>
<div style="left:780px;top:280px;width:148px;height:1px;background:#fff;"></div>
<div style="left:779px;top:95px;width:149px;height:16px;background:#3399ff;"></div>
<div class="t " style="left:795.5px;top:20.50px;font-size:9.5px;letter-spacing:0.000px;color:#00f;-webkit-text-stroke:0.12px currentColor;">1</div>
<div class="t " style="left:804px;top:22.00px;font-size:11.5px;letter-spacing:0.649px;color:#000;">Configuration traits</div>
<div class="t " style="left:795.5px;top:46.50px;font-size:9.5px;letter-spacing:0.000px;color:#00f;-webkit-text-stroke:0.12px currentColor;">2</div>
<div class="t " style="left:804px;top:48.00px;font-size:11.5px;letter-spacing:0.173px;color:#000;">Points</div>
<svg class="i" style="left:917px;top:51px" width="4" height="7" viewBox="0 0 4 7"><path d="M0 0L4 3.5L0 7z" fill="#000"/></svg>
<div class="t " style="left:795.5px;top:62.50px;font-size:9.5px;letter-spacing:0.000px;color:#00f;-webkit-text-stroke:0.12px currentColor;">3</div>
<div class="t " style="left:804px;top:64.00px;font-size:11.5px;letter-spacing:0.268px;color:#000;">Lignes</div>
<svg class="i" style="left:917px;top:67px" width="4" height="7" viewBox="0 0 4 7"><path d="M0 0L4 3.5L0 7z" fill="#000"/></svg>
<div class="t " style="left:795.5px;top:78.50px;font-size:9.5px;letter-spacing:0.000px;color:#00f;-webkit-text-stroke:0.12px currentColor;">4</div>
<div class="t " style="left:804px;top:80.00px;font-size:11.5px;letter-spacing:0.503px;color:#000;">Cercles</div>
<svg class="i" style="left:917px;top:83px" width="4" height="7" viewBox="0 0 4 7"><path d="M0 0L4 3.5L0 7z" fill="#000"/></svg>
<div class="t " style="left:795.5px;top:94.50px;font-size:9.5px;letter-spacing:0.000px;color:#fff;-webkit-text-stroke:0.12px currentColor;">5</div>
<div class="t " style="left:804px;top:96.00px;font-size:11.5px;letter-spacing:0.546px;color:#fff;">Arcs de cercle</div>
<svg class="i" style="left:917px;top:99px" width="4" height="7" viewBox="0 0 4 7"><path d="M0 0L4 3.5L0 7z" fill="#fff"/></svg>
<div class="t " style="left:795.5px;top:110.50px;font-size:9.5px;letter-spacing:0.000px;color:#00f;-webkit-text-stroke:0.12px currentColor;">6</div>
<div class="t " style="left:795.5px;top:136.50px;font-size:9.5px;letter-spacing:0.000px;color:#00f;-webkit-text-stroke:0.12px currentColor;">7</div>
<div class="t " style="left:804px;top:138.00px;font-size:11.5px;letter-spacing:0.512px;color:#000;">Modifier</div>
<div class="t " style="left:795.5px;top:152.50px;font-size:9.5px;letter-spacing:0.000px;color:#00f;-webkit-text-stroke:0.12px currentColor;">8</div>
<div class="t " style="left:804px;top:154.00px;font-size:11.5px;letter-spacing:0.539px;color:#000;">Effacer</div>
<div class="t " style="left:795.5px;top:168.50px;font-size:9.5px;letter-spacing:0.000px;color:#00f;-webkit-text-stroke:0.12px currentColor;">9</div>
<div class="t " style="left:804px;top:196.00px;font-size:11.5px;letter-spacing:0.410px;color:#00f;">Hachures</div>
<div class="t " style="left:787.5px;top:211.50px;font-size:10px;letter-spacing:-0.501px;color:#00f;font-family:'Liberation Mono',monospace;-webkit-text-stroke:0.12px currentColor;">01</div>
<div class="t " style="left:804px;top:212.00px;font-size:11.5px;letter-spacing:0.749px;color:#000;">Créer</div>
<div class="t " style="left:787.5px;top:227.50px;font-size:10px;letter-spacing:-0.501px;color:#00f;font-family:'Liberation Mono',monospace;-webkit-text-stroke:0.12px currentColor;">02</div>
<div class="t " style="left:804px;top:228.00px;font-size:11.5px;letter-spacing:0.512px;color:#000;">Modifier</div>
<div class="t " style="left:787.5px;top:243.50px;font-size:10px;letter-spacing:-0.501px;color:#00f;font-family:'Liberation Mono',monospace;-webkit-text-stroke:0.12px currentColor;">03</div>
<div class="t " style="left:804px;top:244.00px;font-size:11.5px;letter-spacing:0.539px;color:#000;">Effacer</div>
<div class="t " style="left:787.5px;top:259.50px;font-size:10px;letter-spacing:-0.501px;color:#00f;font-family:'Liberation Mono',monospace;-webkit-text-stroke:0.12px currentColor;">04</div>
<div class="t " style="left:804px;top:286.00px;font-size:11.5px;letter-spacing:0.699px;color:#00f;">A suivre</div>
<div class="t " style="left:787.5px;top:301.50px;font-size:10px;letter-spacing:-0.501px;color:#00f;font-family:'Liberation Mono',monospace;-webkit-text-stroke:0.12px currentColor;">05</div>
<div class="t " style="left:804px;top:302.00px;font-size:11.5px;letter-spacing:0.688px;color:#000;">Au premier plan</div>
<div class="t " style="left:787.5px;top:317.50px;font-size:10px;letter-spacing:-0.501px;color:#00f;font-family:'Liberation Mono',monospace;-webkit-text-stroke:0.12px currentColor;">06</div>
<div class="t " style="left:804px;top:318.00px;font-size:11.5px;letter-spacing:0.604px;color:#000;">En arrière plan</div>
<div style="left:928px;top:95px;width:185px;height:70px;background:rgba(0,0,0,0.28);filter:blur(1.5px);"></div>
<div style="left:925px;top:92px;width:185px;height:70px;background:#f0f0f0;box-sizing:border-box;border:1px solid #979797;"></div>
<div style="left:928px;top:143px;width:180px;height:16px;background:#3399ff;"></div>
<div class="t " style="left:944px;top:94.50px;font-size:9.5px;letter-spacing:0.000px;color:#00f;-webkit-text-stroke:0.12px currentColor;">1</div>
<div class="t " style="left:953.5px;top:96.00px;font-size:11.5px;letter-spacing:0.511px;color:#000;">Par 3 points</div>
<div class="t " style="left:944px;top:110.50px;font-size:9.5px;letter-spacing:0.000px;color:#00f;-webkit-text-stroke:0.12px currentColor;">2</div>
<div class="t " style="left:953.5px;top:112.00px;font-size:11.5px;letter-spacing:0.841px;color:#000;">Départ + centre + fin</div>
<div class="t " style="left:944px;top:126.50px;font-size:9.5px;letter-spacing:0.000px;color:#00f;-webkit-text-stroke:0.12px currentColor;">3</div>
<div class="t " style="left:953.5px;top:128.00px;font-size:11.5px;letter-spacing:0.812px;color:#000;">Départ + centre + angle</div>
<div class="t " style="left:944px;top:142.50px;font-size:9.5px;letter-spacing:0.000px;color:#fff;-webkit-text-stroke:0.12px currentColor;">4</div>
<div class="t " style="left:953.5px;top:144.00px;font-size:11.5px;letter-spacing:0.807px;color:#fff;">Départ + fin + flèche</div>
</body></html>
